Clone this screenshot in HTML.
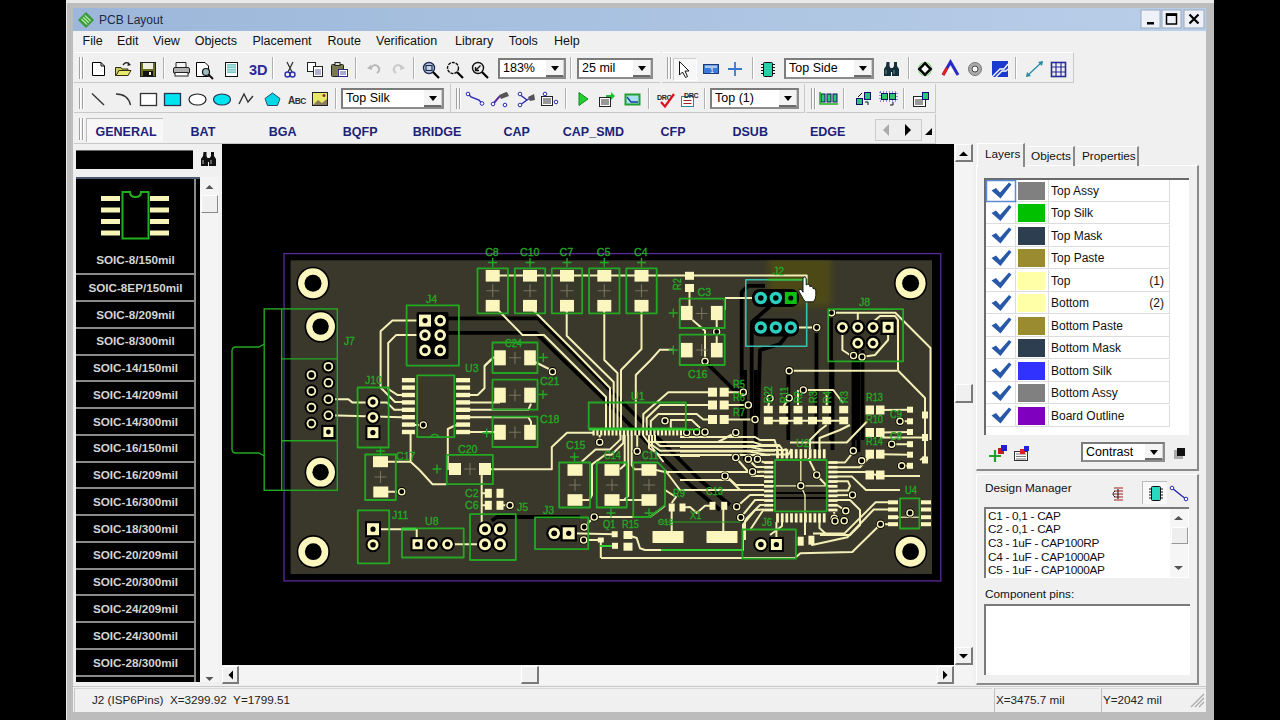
<!DOCTYPE html>
<html><head><meta charset="utf-8">
<style>
*{margin:0;padding:0;box-sizing:border-box}
html,body{width:1280px;height:720px;overflow:hidden;background:#000;font-family:"Liberation Sans",sans-serif}
.a{position:absolute}
#win{position:absolute;left:66px;top:0;width:1148px;height:720px;background:#bcbcbc;border-left:1px solid #e8e8e8}
#topw{position:absolute;left:66px;top:0;width:1148px;height:3px;background:#e9e9e9}
#title{position:absolute;left:73px;top:8px;width:1133px;height:23px;background:linear-gradient(to right,#9cb7da,#b9cee8)}
#title .t{position:absolute;left:26px;top:5px;font-size:12px;color:#1a2a44}
#client{position:absolute;left:73px;top:31px;width:1133px;height:681px;background:#f0f0f0}
.menu{position:absolute;top:34px;font-size:12.5px;color:#111}
.tb{position:absolute;border-top:1px solid #fdfdfd;border-bottom:1px solid #c8c8c8}
.grip{position:absolute;width:2px;border-left:1px solid #a0a0a0;border-right:1px solid #fff}
.sep{position:absolute;width:2px;border-left:1px solid #b0b0b0;border-right:1px solid #fff}
.combo{position:absolute;background:#fff;border:2px solid #7c7c7c;border-bottom-color:#8c8c8c;border-right-color:#8c8c8c;font-size:12.5px;color:#000;padding-left:3px;line-height:17px}
.combo .btn{position:absolute;right:0;top:0;bottom:0;width:18px;background:#f4f4f4;border-right:1px solid #cfcfcf;border-bottom:2px solid #6a6a6a}
.combo .btn:after{content:"";position:absolute;left:5px;top:6px;border-left:4.5px solid transparent;border-right:4.5px solid transparent;border-top:5px solid #000}
.tab{position:absolute;top:124.5px;font-size:12.5px;font-weight:bold;color:#1c2278}
.lib{position:absolute;left:76px;width:119px;height:27px;border-bottom:2px solid #8a8a8a;color:#d8d8d8;font-size:12px;font-weight:bold;text-align:center;line-height:26px}
.lay{position:absolute;left:986px;width:184px;height:22px;border-bottom:1px solid #dcdcdc;border-right:1px solid #dcdcdc}
.lay .ck{position:absolute;left:0;top:0;width:30px;height:22px;border-right:1px solid #dcdcdc}
.lay .sw{position:absolute;left:32px;top:2px;width:27px;height:18px}
.lay .nm{position:absolute;left:65px;top:4px;font-size:12px;color:#111}
.lay .nr{position:absolute;right:5px;top:4px;font-size:12px;color:#111}
.lay .cl{position:absolute;left:62px;top:0;width:1px;height:22px;background:#dcdcdc}
svg{position:absolute;overflow:visible}
.rt{position:absolute;font-size:11.8px;color:#111;line-height:14px;white-space:nowrap}
.st{position:absolute;top:692px;font-size:11.7px;color:#222;white-space:nowrap;line-height:15px}
.libt{position:absolute;left:76px;width:119px;text-align:center;color:#d4d4d4;font-size:11.7px;font-weight:bold;line-height:16px}
</style></head><body>
<div id="win"></div>
<div id="topw"></div>
<div id="title"><div class="t">PCB Layout</div></div>
<div id="client"></div>
<div class="menu" style="left:82.5px">File</div><div class="menu" style="left:117px">Edit</div><div class="menu" style="left:153px">View</div><div class="menu" style="left:194.7px">Objects</div><div class="menu" style="left:252.5px">Placement</div><div class="menu" style="left:327.5px">Route</div><div class="menu" style="left:376px">Verification</div><div class="menu" style="left:455px">Library</div><div class="menu" style="left:508.7px">Tools</div><div class="menu" style="left:554px">Help</div>
<!-- toolbar bands -->
<div class="a" style="left:74px;top:52px;width:586px;height:31px;border-top:1px solid #fff;border-bottom:1px solid #c9c9c9"></div>
<div class="a" style="left:662px;top:52px;width:412px;height:31px;border-top:1px solid #fff;border-bottom:1px solid #c9c9c9;border-right:1px solid #c9c9c9"></div>
<div class="a" style="left:74px;top:84px;width:731px;height:29px;border-bottom:1px solid #c9c9c9;border-right:1px solid #c9c9c9"></div>
<div class="a" style="left:806px;top:84px;width:130px;height:29px;border-bottom:1px solid #c9c9c9;border-right:1px solid #c9c9c9"></div>
<div class="a" style="left:74px;top:114px;width:862px;height:30px;border-bottom:1px solid #c9c9c9;border-right:1px solid #c9c9c9"></div>
<!-- grippers -->
<div class="grip" style="left:79px;top:57px;height:22px"></div><div class="grip" style="left:82px;top:57px;height:22px"></div>
<div class="grip" style="left:79px;top:88px;height:21px"></div><div class="grip" style="left:82px;top:88px;height:21px"></div>
<div class="grip" style="left:79px;top:118px;height:22px"></div><div class="grip" style="left:82px;top:118px;height:22px"></div>
<div class="grip" style="left:667px;top:57px;height:22px"></div><div class="grip" style="left:670px;top:57px;height:22px"></div>
<div class="grip" style="left:810.5px;top:88px;height:21px"></div><div class="grip" style="left:813.5px;top:88px;height:21px"></div>
<!-- separators row1 -->
<div class="sep" style="left:163px;top:57px;height:22px"></div>
<div class="sep" style="left:272px;top:57px;height:22px"></div>
<div class="sep" style="left:355px;top:57px;height:22px"></div>
<div class="sep" style="left:413px;top:57px;height:22px"></div>
<div class="sep" style="left:570px;top:57px;height:22px"></div>
<div class="sep" style="left:752px;top:57px;height:22px"></div>
<div class="sep" style="left:908px;top:57px;height:22px"></div>
<div class="sep" style="left:1015px;top:57px;height:22px"></div>
<!-- separators row2 -->
<div class="sep" style="left:335px;top:88px;height:21px"></div>
<div class="a" style="left:450px;top:84px;width:1px;height:29px;background:#c9c9c9"></div><div class="grip" style="left:456px;top:88px;height:21px"></div><div class="grip" style="left:459px;top:88px;height:21px"></div>
<div class="sep" style="left:565px;top:88px;height:21px"></div>
<div class="sep" style="left:648px;top:88px;height:21px"></div>
<div class="sep" style="left:704px;top:88px;height:21px"></div>
<div class="sep" style="left:843px;top:88px;height:21px"></div>
<div class="sep" style="left:903px;top:88px;height:21px"></div>
<!-- pressed pointer button -->
<div class="a" style="left:673px;top:58px;width:24px;height:23px;background:#f7f7f7;border:1px solid #cfcfcf;border-right-color:#fff;border-bottom-color:#fff"></div>
<!-- combos -->
<div class="combo" style="left:498px;top:58px;width:68px;height:21px">183%<div class="btn"></div></div>
<div class="combo" style="left:577px;top:58px;width:76px;height:21px">25 mil<div class="btn"></div></div>
<div class="combo" style="left:784px;top:58px;width:90px;height:21px">Top Side<div class="btn"></div></div>
<div class="combo" style="left:341px;top:88px;width:103px;height:21px">Top Silk<div class="btn"></div></div>
<div class="combo" style="left:710px;top:88px;width:89px;height:21px">Top (1)<div class="btn"></div></div>

<svg class="a" style="left:0;top:0" width="1280" height="150" viewBox="0 0 1280 150">
<!-- title app icon -->
<g transform="translate(86,20) rotate(45)"><rect x="-5.7" y="-5.7" width="11.4" height="11.4" fill="#3a9a3a"/><path d="M-4,-2.5H4M-4,0H4M-4,2.5H4" stroke="#b8f0a8" stroke-width="1.3"/></g>
<!-- window buttons -->
<g>
<rect x="1141" y="10" width="19" height="18" fill="#eef2f8" stroke="#9aa8b8"/>
<rect x="1147" y="22" width="7" height="2.5" fill="#000"/>
<rect x="1162" y="10" width="19" height="18" fill="#eef2f8" stroke="#9aa8b8"/>
<rect x="1166.5" y="14" width="10" height="10" fill="none" stroke="#000" stroke-width="1.5"/><rect x="1166" y="13.5" width="11" height="2.5" fill="#000"/>
<rect x="1184" y="10" width="20" height="18" fill="#eef2f8" stroke="#9aa8b8"/>
<path d="M1189.5,14.5L1198.5,23.5M1198.5,14.5L1189.5,23.5" stroke="#000" stroke-width="2.2"/>
</g>
<!-- row1 -->
<path d="M92.5,62.5H101L104.5,66V75.5H92.5Z" fill="#fff" stroke="#000"/><path d="M101,62.5V66H104.5" fill="none" stroke="#000"/>
<path d="M115.5,67.5H121L122,69H128V75.5H115.5Z" fill="#c8c860" stroke="#303010"/><path d="M116,75.5L119,70.5H131L128,75.5Z" fill="#e8e870" stroke="#303010"/><path d="M123,65Q126,61 129,64" fill="none" stroke="#222" stroke-width="1.3"/><path d="M128,62L131,65L127.5,66Z" fill="#222"/>
<rect x="140.5" y="62.5" width="15" height="14" fill="#6e6e20" stroke="#222"/><rect x="143" y="63" width="10" height="6" fill="#f0f0e0"/><rect x="143" y="71" width="10" height="5.5" fill="#111"/><rect x="149" y="72" width="2" height="3" fill="#f0f0e0"/>
<path d="M176,67V62.5H186V67" fill="#f4f4f4" stroke="#222"/><rect x="173.5" y="67.5" width="16" height="6" rx="1.5" fill="#b0b0b0" stroke="#222"/><rect x="175" y="72.5" width="13" height="3.5" fill="#fff" stroke="#222"/>
<path d="M196.5,62.5H205L208.5,66V76.5H196.5Z" fill="#fff" stroke="#000"/><circle cx="206" cy="72" r="3.5" fill="#9bbcc0" stroke="#111" stroke-width="1.2"/><path d="M208.5,74.5L213,79" stroke="#111" stroke-width="2"/>
<rect x="225.5" y="62.5" width="12" height="14" fill="#fff" stroke="#111"/><rect x="227" y="64" width="9" height="9" fill="#7ac8c8"/><path d="M227,66H236M227,68.5H236M227,71H236" stroke="#e0f4f4" stroke-width="0.8"/>
<text x="249" y="75" font-family="Liberation Sans" font-weight="bold" font-size="14.5" fill="#2a2a9c">3D</text>
<path d="M287,62L292,72M293,62L288,72" stroke="#333" stroke-width="1.3"/><circle cx="287.5" cy="74.5" r="2.5" fill="none" stroke="#3030b0" stroke-width="1.4"/><circle cx="292.5" cy="74.5" r="2.5" fill="none" stroke="#3030b0" stroke-width="1.4"/>
<rect x="307.5" y="62.5" width="8" height="9" fill="#fff" stroke="#222"/><rect x="313.5" y="66.5" width="9" height="10" fill="#fff" stroke="#222"/><path d="M315,70H321M315,72H321M315,74H321" stroke="#3a3a8a" stroke-width="0.8"/>
<rect x="331.5" y="64.5" width="12" height="12" rx="1" fill="#7a7a50" stroke="#222"/><rect x="335" y="62.5" width="5" height="3" fill="#ddd" stroke="#222"/><rect x="338.5" y="69.5" width="9" height="7" fill="#fff" stroke="#2a2a8a"/><path d="M340,72H346M340,74H346" stroke="#2a2a8a" stroke-width="0.8"/>
<path d="M371,68Q374,63 378,66.5Q381,70 377,73" fill="none" stroke="#b8b8b8" stroke-width="2"/><path d="M367,68.5L371,64.5L372,70Z" fill="#b8b8b8"/>
<path d="M402,68Q399,63 395,66.5Q392,70 396,73" fill="none" stroke="#c8c8c8" stroke-width="2"/><path d="M405,68.5L401,64.5L400,70Z" fill="#c8c8c8"/>
<circle cx="429" cy="68" r="5.5" fill="#c9d6e8" stroke="#1e2c50" stroke-width="1.4"/><rect x="426" y="65.5" width="6" height="5" fill="none" stroke="#1e2c50" stroke-width="1.2"/><path d="M433,72L439,78" stroke="#000" stroke-width="2.2"/>
<circle cx="453" cy="68" r="5.5" fill="#eee" stroke="#111" stroke-width="1.4" stroke-dasharray="3 1"/><path d="M457,72L463,78" stroke="#000" stroke-width="2.2"/>
<circle cx="478" cy="68" r="5.5" fill="#eee" stroke="#111" stroke-width="1.4"/><path d="M480.5,65.5L475.5,70.5M475.5,67V70.5H479" fill="none" stroke="#111" stroke-width="1.4"/><path d="M482,72L488,78" stroke="#000" stroke-width="2.2"/>
<path d="M679.5,61.5V75L682.5,72L685.5,77.5L687.5,76.5L685,71H689Z" fill="#fff" stroke="#111"/>
<rect x="703.5" y="64.5" width="15" height="9" fill="#3a7ad8" stroke="#1a3a80"/><rect x="705" y="65.5" width="12" height="2.5" fill="#aac8f0"/><text x="710" y="73" font-size="7" font-family="Liberation Sans" fill="#fff">1</text>
<path d="M728,69H742M735,62V76" stroke="#3a78c8" stroke-width="1.8"/>
<rect x="763.5" y="62.5" width="9" height="14" rx="1" fill="#28d0a8" stroke="#111"/><path d="M761,64.5H763M761,67.5H763M761,70.5H763M761,73.5H763M773,64.5H775M773,67.5H775M773,70.5H775M773,73.5H775" stroke="#111" stroke-width="1.2"/>
<path d="M886.5,62H889.5V66L891,69V76H884V69L886,66Z M894,62H897V66L899,69V76H892V69L894,66Z" fill="#14303a"/><rect x="889" y="68" width="5" height="4" fill="#14303a"/><path d="M886,70V74M894,70V74" stroke="#6a8a90" stroke-width="1"/>
<circle cx="925" cy="69" r="6.5" fill="none" stroke="#60d060" stroke-width="1"/><rect x="921" y="65" width="8" height="8" transform="rotate(45 925 69)" fill="#fff" stroke="#000" stroke-width="2.5"/>
<path d="M943,75L950.5,62L958,75" fill="none" stroke="#2828c8" stroke-width="3"/><path d="M943,75L947,68" stroke="#e02020" stroke-width="3"/><circle cx="950.5" cy="71" r="2.5" fill="#fff"/>
<circle cx="975" cy="69" r="6.5" fill="#aaa" stroke="#777"/><circle cx="975" cy="69" r="3" fill="#fff" stroke="#444"/>
<rect x="992" y="61" width="16" height="16" fill="#1a3ad0"/><path d="M992,77L1000,69H1004L1008,64M996,77L1002,71H1006L1008,69" stroke="#fff" stroke-width="1.3" fill="none"/>
<path d="M1027,76L1042,62" stroke="#2a8aa0" stroke-width="1.3"/><path d="M1026,77L1027,72L1031,76Z M1043,61L1042,66L1038,62Z" fill="#2a8aa0"/>
<rect x="1051.5" y="62.5" width="14" height="14" fill="none" stroke="#2a2a9a" stroke-width="1.6"/><path d="M1056,62.5V76.5M1061,62.5V76.5M1051.5,67H1065.5M1051.5,72H1065.5" stroke="#2a2a9a" stroke-width="1.2"/>
<!-- row2 -->
<path d="M92,93.5L104,105" stroke="#333" stroke-width="1.4"/>
<path d="M116,94Q128,94 130.5,105" fill="none" stroke="#333" stroke-width="1.4"/>
<rect x="140.5" y="93.5" width="16" height="12" fill="#fff" stroke="#333" stroke-width="1.3"/>
<rect x="164.5" y="93.5" width="16" height="12" fill="#00e4f0" stroke="#235" stroke-width="1.3"/>
<ellipse cx="197.5" cy="99.5" rx="8.5" ry="5.5" fill="#fff" stroke="#222" stroke-width="1.2"/>
<ellipse cx="222" cy="99.5" rx="8.5" ry="5.5" fill="#00e4f0" stroke="#235" stroke-width="1.2"/>
<path d="M239,104L244,94L248,102L253,96" fill="none" stroke="#333" stroke-width="1.4"/>
<path d="M272.5,93L280,98.5L277.5,105.5H267.5L265,98.5Z" fill="#00d8e8" stroke="#2a4a6a"/>
<text x="288" y="104" font-family="Liberation Sans" font-weight="bold" font-size="10" fill="#333" letter-spacing="-0.5">A<tspan font-size="8.5">BC</tspan></text>
<rect x="312.5" y="92.5" width="15" height="13" fill="#e8e868" stroke="#222"/><path d="M313,105L318,100L322,103L327,99V105Z" fill="#8a7a60"/><circle cx="324" cy="95.5" r="1.5" fill="#8a2a2a"/>
<path d="M468,93.5L471,97L479,100L482,103.5" fill="none" stroke="#2a2ab0" stroke-width="1.4"/><circle cx="468" cy="94" r="1.8" fill="#fff" stroke="#2a2ab0"/><circle cx="482" cy="103.5" r="1.8" fill="#fff" stroke="#2a2ab0"/>
<path d="M493,104L499,97L506,93" fill="none" stroke="#5a2aa0" stroke-width="2"/><path d="M499,95L507,92L509,96L501,99Z" fill="#555"/><circle cx="493" cy="104" r="1.8" fill="#fff" stroke="#2a2ab0"/><circle cx="505" cy="105" r="1.8" fill="#fff" stroke="#2a2ab0"/>
<path d="M519,94L527,100L520,105M527,100L534,96" fill="none" stroke="#2a2ab0" stroke-width="1.4"/><path d="M528,97L534,94L535,100L530,101Z" fill="#555"/><circle cx="520" cy="94" r="1.8" fill="#fff" stroke="#2a2ab0"/><circle cx="520" cy="105" r="1.8" fill="#fff" stroke="#2a2ab0"/>
<rect x="541.5" y="96.5" width="11" height="9" fill="#fff" stroke="#222"/><path d="M543,99H551M543,101H551M543,103H551" stroke="#333"/><circle cx="545" cy="94" r="1.8" fill="#fff" stroke="#2a2ab0"/><circle cx="556" cy="102" r="1.8" fill="#fff" stroke="#2a2ab0"/>
<path d="M579,92.5L588,99L579,105.5Z" fill="#20d030" stroke="#108a20"/>
<rect x="599.5" y="97.5" width="11" height="9" fill="#fff" stroke="#222"/><path d="M601,100H609M601,102H609M601,104H609" stroke="#333"/><path d="M606,95H611V92L615,96L611,100V97H606Z" fill="#20c030"/>
<rect x="625.5" y="94.5" width="14" height="10" fill="#a8e0f0" stroke="#20a030" stroke-width="2"/><path d="M627,97L631,102H638" fill="none" stroke="#1a3aa0" stroke-width="1.3"/>
<text x="657" y="100" font-family="Liberation Sans" font-weight="bold" font-size="7" fill="#222" letter-spacing="-0.3">DRC</text><path d="M661,102L665,106.5L674,94" fill="none" stroke="#e01020" stroke-width="2.2"/>
<rect x="681.5" y="96.5" width="12" height="10" fill="#fff" stroke="#2a8aa0"/><path d="M683.5,100.5H691.5M683.5,103.5H691.5" stroke="#a02020" stroke-width="1"/><text x="684" y="98" font-family="Liberation Sans" font-weight="bold" font-size="7" fill="#222" letter-spacing="-0.3">DRC</text>
<rect x="821" y="94" width="4" height="8" fill="#28c870" stroke="#116"/><rect x="827" y="94" width="4" height="8" fill="#28c870" stroke="#116"/><rect x="833" y="94" width="4" height="8" fill="#28c870" stroke="#116"/><path d="M820,92V104H838" fill="none" stroke="#20b020" stroke-width="1.6"/>
<rect x="856.5" y="98.5" width="6" height="6" fill="#28c870" stroke="#116"/><rect x="864.5" y="92.5" width="6" height="7" fill="#28c870" stroke="#116"/><path d="M858,97L862,93M865,102H868V105" stroke="#111" fill="none"/>
<rect x="881.5" y="93.5" width="6" height="6" fill="#28c870" stroke="#116"/><rect x="889.5" y="93.5" width="6" height="6" fill="#28c870" stroke="#116"/><path d="M893,102V105H890" stroke="#111" fill="none"/><rect x="880" y="92" width="17" height="9" fill="none" stroke="#2a2ad0" stroke-dasharray="1 2"/>
<rect x="913.5" y="96.5" width="12" height="10" fill="#fff" stroke="#222"/><path d="M915,100H923M915,102H923M915,104H923" stroke="#333"/><rect x="922.5" y="92.5" width="6" height="7" fill="#28c870" stroke="#116"/>
<!-- tabs bar nav -->
<rect x="875.5" y="119.5" width="46" height="21" fill="#eee" stroke="#ccc"/>
<path d="M889,124V136L883,130Z" fill="#aaa"/><path d="M905,124V136L911,130Z" fill="#000"/>
<path d="M925,135H932V128Z" fill="#000"/>
<!-- binoculars left panel -->
<path d="M203.5,152H206.5V156L208,159V166H201V159L203,156Z M211,152H214V156L216,159V166H209V159L211,156Z" fill="#111"/><rect x="206" y="158" width="5" height="4" fill="#111"/><path d="M203,160V164M211,160V164" stroke="#bbb" stroke-width="1"/>
</svg>

<div class="a" style="left:86px;top:118px;width:77px;height:24px;background:#f7f7f7;border-top:1px solid #bdbdbd;border-left:1px solid #bdbdbd"></div>
<div class="tab" style="left:95.5px">GENERAL</div><div class="tab" style="left:190.5px">BAT</div><div class="tab" style="left:268.7px">BGA</div><div class="tab" style="left:342.8px">BQFP</div><div class="tab" style="left:412.8px">BRIDGE</div><div class="tab" style="left:503.4px">CAP</div><div class="tab" style="left:562.8px">CAP_SMD</div><div class="tab" style="left:660.6px">CFP</div><div class="tab" style="left:732.5px">DSUB</div><div class="tab" style="left:810px">EDGE</div>
<div class="a" style="left:76px;top:150px;width:117px;height:19px;background:#000;border-top:1px solid #666"></div>
<div class="a" style="left:76px;top:177px;width:124px;height:505px;background:#000;border-top:2px solid #4a5a70"></div>
<div class="a" style="left:194px;top:179px;width:2px;height:503px;background:#8a8a8a"></div>
<svg class="a" style="left:0;top:0" width="240" height="280" viewBox="0 0 240 280">
<g fill="#f8f4b8"><rect x="101" y="196" width="19" height="5"/><rect x="101" y="207.5" width="19" height="5"/><rect x="101" y="219" width="19" height="5"/><rect x="101" y="230.5" width="19" height="5"/>
<rect x="150" y="196" width="19" height="5"/><rect x="150" y="207.5" width="19" height="5"/><rect x="150" y="219" width="19" height="5"/><rect x="150" y="230.5" width="19" height="5"/></g>
<path d="M122.5,192H130Q130,197 135.5,197Q141,197 141,192H148.5V238.5H122.5Z" fill="none" stroke="#20b020" stroke-width="2"/>
</svg>
<div class="libt" style="top:252px">SOIC-8/150mil</div>
<div class="a" style="left:76px;top:273.2px;width:118px;height:2px;background:#8a8a8a"></div>
<div class="a" style="left:76px;top:300.0px;width:118px;height:2px;background:#8a8a8a"></div>
<div class="a" style="left:76px;top:326.7px;width:118px;height:2px;background:#8a8a8a"></div>
<div class="a" style="left:76px;top:353.5px;width:118px;height:2px;background:#8a8a8a"></div>
<div class="a" style="left:76px;top:380.3px;width:118px;height:2px;background:#8a8a8a"></div>
<div class="a" style="left:76px;top:407.0px;width:118px;height:2px;background:#8a8a8a"></div>
<div class="a" style="left:76px;top:433.8px;width:118px;height:2px;background:#8a8a8a"></div>
<div class="a" style="left:76px;top:460.6px;width:118px;height:2px;background:#8a8a8a"></div>
<div class="a" style="left:76px;top:487.4px;width:118px;height:2px;background:#8a8a8a"></div>
<div class="a" style="left:76px;top:514.1px;width:118px;height:2px;background:#8a8a8a"></div>
<div class="a" style="left:76px;top:540.9px;width:118px;height:2px;background:#8a8a8a"></div>
<div class="a" style="left:76px;top:567.7px;width:118px;height:2px;background:#8a8a8a"></div>
<div class="a" style="left:76px;top:594.4px;width:118px;height:2px;background:#8a8a8a"></div>
<div class="a" style="left:76px;top:621.2px;width:118px;height:2px;background:#8a8a8a"></div>
<div class="a" style="left:76px;top:648.0px;width:118px;height:2px;background:#8a8a8a"></div>
<div class="a" style="left:76px;top:674.8px;width:118px;height:2px;background:#8a8a8a"></div>
<div class="libt" style="top:279.7px">SOIC-8EP/150mil</div>
<div class="libt" style="top:306.5px">SOIC-8/209mil</div>
<div class="libt" style="top:333.2px">SOIC-8/300mil</div>
<div class="libt" style="top:360.0px">SOIC-14/150mil</div>
<div class="libt" style="top:386.8px">SOIC-14/209mil</div>
<div class="libt" style="top:413.5px">SOIC-14/300mil</div>
<div class="libt" style="top:440.3px">SOIC-16/150mil</div>
<div class="libt" style="top:467.1px">SOIC-16/209mil</div>
<div class="libt" style="top:493.9px">SOIC-16/300mil</div>
<div class="libt" style="top:520.6px">SOIC-18/300mil</div>
<div class="libt" style="top:547.4px">SOIC-20/209mil</div>
<div class="libt" style="top:574.2px">SOIC-20/300mil</div>
<div class="libt" style="top:600.9px">SOIC-24/209mil</div>
<div class="libt" style="top:627.7px">SOIC-24/300mil</div>
<div class="libt" style="top:654.5px">SOIC-28/300mil</div>
<div class="a" style="left:200px;top:177px;width:19px;height:505px;background:#f4f4f4"></div>
<div class="a" style="left:201px;top:195px;width:17px;height:18px;background:#f0f0f0;border:1px solid #fff;border-right-color:#8a8a8a;border-bottom-color:#8a8a8a"></div>
<svg class="a" style="left:0;top:0" width="240" height="700"><path d="M205.5,189H213.5L209.5,185Z" fill="#555"/><path d="M205.5,677H213.5L209.5,681Z" fill="#555"/></svg>
<div class="a" style="left:222px;top:144px;width:732px;height:521px;background:#000"></div>
<!--PCB--><svg class="a" style="left:0;top:0" width="1280" height="720" viewBox="0 0 1280 720">
<rect x="284" y="253.6" width="656.8" height="327.3" fill="none" stroke="#5a2a9a" stroke-width="1.3"/>
<rect x="290.6" y="260.3" width="641.4" height="313.7" fill="#3a382b"/>
<clipPath id="bc"><rect x="290.6" y="260.3" width="641.4" height="313.7"/></clipPath>
<g clip-path="url(#bc)"><defs><filter id="gb" x="-20%" y="-20%" width="140%" height="140%"><feGaussianBlur stdDeviation="3"/></filter></defs><rect x="769" y="256" width="62" height="50" fill="#4e4818" filter="url(#gb)"/>
<g fill="none" stroke="#000" stroke-linejoin="round"><polyline points="446.0,318.3 538.0,318.3 560.0,340.0 618.0,398.0 660.0,440.0 700.0,480.0 730.0,505.0" stroke-width="3.8"/><polyline points="446.0,332.8 536.0,332.8 552.0,349.0 610.0,405.0 650.0,445.0 690.0,485.0 720.0,510.0" stroke-width="3.8"/><polyline points="491.7,520.8 497.0,517.0 540.0,517.0 580.0,517.0" stroke-width="3.8"/><polyline points="705.0,361.3 733.0,389.0 743.0,392.0" stroke-width="3.8"/><polyline points="765.0,285.8 748.0,285.8 741.7,292.0 741.7,370.0 741.7,420.0" stroke-width="3.8"/><polyline points="775.0,300.0 768.0,308.0 752.0,322.0 751.7,340.0 751.7,420.0" stroke-width="3.8"/><polyline points="790.8,330.0 780.0,344.0 760.0,350.0 758.0,420.0" stroke-width="3.8"/><polyline points="816.5,333.0 816.5,450.0" stroke-width="3.8"/><polyline points="831.0,318.0 831.0,440.0" stroke-width="3.8"/><polyline points="853.5,360.0 853.5,452.0" stroke-width="3.8"/><polyline points="858.4,360.0 858.4,452.0" stroke-width="3.8"/><polyline points="745.0,370.0 745.0,460.0" stroke-width="3.8"/><polyline points="755.8,370.0 755.8,455.0" stroke-width="3.8"/><polyline points="788.3,375.0 788.3,440.0" stroke-width="3.8"/><polyline points="832.5,360.0 832.5,450.0" stroke-width="3.8"/><polyline points="856.7,350.0 856.7,440.0" stroke-width="3.8"/><polyline points="862.5,350.0 862.5,440.0" stroke-width="3.8"/><polyline points="775.0,493.0 826.7,493.0" stroke-width="2.2"/><polyline points="775.0,498.0 826.7,498.0" stroke-width="2.2"/></g>
<g fill="none" stroke="#f3efb6" stroke-linejoin="round"><polyline points="328.4,399.2 348.4,399.2 352.6,402.6 372.9,402.6 387.0,402.6 394.3,409.7 402.0,409.7" stroke-width="2.0"/><polyline points="328.4,415.3 402.0,417.3" stroke-width="2.0"/><polyline points="425.0,320.6 392.4,320.6 380.6,331.3 380.6,387.5 395.0,402.0 402.0,402.0" stroke-width="2.0"/><polyline points="425.0,335.1 396.0,335.1 388.2,343.0 388.2,389.0 397.3,394.9 402.0,394.9" stroke-width="2.0"/><polyline points="414.0,425.0 420.0,425.0" stroke-width="2.0"/><polyline points="410.6,432.0 410.6,461.7 419.5,470.0 432.5,484.2 446.7,484.2" stroke-width="2.0"/><polyline points="410.6,461.7 387.4,461.7" stroke-width="2.0"/><polyline points="470.0,395.0 477.6,395.0 484.5,388.3 484.5,366.0 490.6,360.0 494.2,357.0" stroke-width="2.0"/><polyline points="470.0,402.4 500.0,402.4" stroke-width="2.0"/><polyline points="470.0,409.8 528.3,409.8 531.0,403.6" stroke-width="2.0"/><polyline points="470.0,417.2 528.3,417.2 531.0,421.7 531.0,426.0" stroke-width="2.0"/><polyline points="470.0,432.0 500.0,432.0" stroke-width="2.0"/><polyline points="456.0,425.0 447.8,429.0 447.8,470.0" stroke-width="2.0"/><polyline points="388.0,491.7 398.0,491.7" stroke-width="2.0"/><polyline points="373.0,529.2 416.7,529.2 416.7,540.0" stroke-width="2.0"/><polyline points="447.5,544.2 485.0,544.2" stroke-width="2.0"/><polyline points="481.7,470.0 481.7,525.0" stroke-width="2.0"/><polyline points="500.0,505.3 506.0,505.3" stroke-width="2.0"/><polyline points="481.7,493.3 488.0,493.3" stroke-width="2.0"/><polyline points="481.7,505.3 488.0,505.3" stroke-width="2.0"/><polyline points="492.7,275.6 800.0,275.6" stroke-width="2.0"/><polyline points="499.0,311.0 522.5,335.0 544.0,335.0 606.0,397.0 606.0,430.0" stroke-width="2.0"/><polyline points="534.0,311.0 573.0,350.0 610.0,388.0 610.0,430.0" stroke-width="2.0"/><polyline points="566.7,311.0 566.7,335.8 613.7,382.0 613.7,430.0" stroke-width="2.0"/><polyline points="604.3,311.0 604.3,360.0 617.5,373.0 617.5,430.0" stroke-width="2.0"/><polyline points="641.5,311.0 641.5,349.0 621.0,370.0 621.0,430.0" stroke-width="2.0"/><polyline points="535.0,362.0 549.0,369.0" stroke-width="2.0"/><polyline points="484.5,366.0 494.0,357.0" stroke-width="2.0"/><polyline points="635.8,430.0 635.8,375.0 650.8,360.0 660.0,349.7 673.0,349.7" stroke-width="2.0"/><polyline points="599.7,435.0 599.7,442.2" stroke-width="2.0"/><polyline points="724.0,392.2 743.0,392.2" stroke-width="2.0"/><polyline points="724.0,405.0 748.0,405.0" stroke-width="2.0"/><polyline points="724.0,419.5 755.0,419.5" stroke-width="2.0"/><polyline points="712.0,392.2 668.3,392.2 643.3,414.0 643.3,430.0" stroke-width="2.0"/><polyline points="712.0,405.0 660.0,405.0 646.7,418.0 646.7,430.0" stroke-width="2.0"/><polyline points="712.0,419.5 703.3,419.5 696.7,414.0 658.3,414.0 650.8,421.0 650.8,430.0" stroke-width="2.0"/><polyline points="670.8,430.0 670.8,420.0 691.7,420.0 700.0,428.0" stroke-width="2.0"/><polyline points="655.0,435.0 655.0,441.7 660.0,446.0 780.0,446.0" stroke-width="2.0"/><polyline points="652.0,435.0 652.0,445.0 660.0,450.8 775.0,450.8" stroke-width="2.0"/><polyline points="649.0,435.0 649.0,448.0 660.0,455.0 770.0,455.0" stroke-width="2.0"/><polyline points="735.8,432.5 718.0,442.0 650.0,442.0" stroke-width="2.0"/><polyline points="689.5,288.0 689.5,306.0" stroke-width="2.0"/><polyline points="692.5,320.0 705.0,330.8 705.0,361.3" stroke-width="2.0"/><polyline points="716.7,320.0 716.7,343.0" stroke-width="2.0"/><polyline points="760.8,298.0 725.0,298.0" stroke-width="2.0"/><polyline points="790.8,327.5 816.7,327.5" stroke-width="2.0"/><polyline points="800.0,275.6 806.7,275.6 806.7,300.0" stroke-width="2.0"/><polyline points="831.5,312.7 895.3,312.7 930.5,348.0 930.5,440.0" stroke-width="2.0"/><polyline points="857.8,312.7 857.8,322.0" stroke-width="2.0"/><polyline points="873.0,322.0 880.0,316.0 895.0,316.0 898.0,320.0 898.0,370.5" stroke-width="2.0"/><polyline points="898.0,370.5 925.0,398.0 925.0,456.7 920.0,460.0" stroke-width="2.0"/><polyline points="842.4,332.0 842.4,350.0 853.0,357.0" stroke-width="2.0"/><polyline points="888.1,332.0 888.1,340.0 875.0,355.0 862.0,357.0" stroke-width="2.0"/><polyline points="789.2,370.8 897.5,370.8" stroke-width="2.0"/><polyline points="768.3,420.8 843.7,420.8" stroke-width="2.0"/><polyline points="770.0,398.3 768.3,406.0" stroke-width="2.0"/><polyline points="789.2,398.0 783.7,406.0" stroke-width="2.0"/><polyline points="803.3,390.0 833.3,390.0 843.0,403.0" stroke-width="2.0"/><polyline points="798.0,390.0 798.0,405.0" stroke-width="2.0"/><polyline points="826.7,395.0 826.7,405.0" stroke-width="2.0"/><polyline points="880.8,410.0 910.0,409.7" stroke-width="2.0"/><polyline points="880.8,432.5 910.0,432.0" stroke-width="2.0"/><polyline points="880.8,454.2 910.0,454.7" stroke-width="2.0"/><polyline points="900.0,421.3 910.0,421.3" stroke-width="2.0"/><polyline points="891.7,444.2 910.0,444.2" stroke-width="2.0"/><polyline points="901.7,465.8 910.0,465.8" stroke-width="2.0"/><polyline points="866.7,421.7 846.7,442.5 790.0,442.5" stroke-width="2.0"/><polyline points="880.0,437.5 925.0,437.5" stroke-width="2.0"/><polyline points="764.0,485.8 837.0,485.8" stroke-width="1.3"/><polyline points="800.8,449.0 800.8,485.8 805.0,495.0 805.0,522.0" stroke-width="1.3"/><polyline points="808.3,458.0 816.7,475.0 826.0,485.0" stroke-width="2.0"/><polyline points="680.0,437.0 755.0,437.0 760.0,440.0 774.5,440.0 777.5,449.0" stroke-width="2.0"/><polyline points="680.0,442.0 753.0,442.0 762.0,445.0 779.2,445.0 782.2,449.0" stroke-width="2.0"/><polyline points="680.0,447.0 751.0,447.0 764.0,450.0 783.8,450.0 786.8,449.0" stroke-width="2.0"/><polyline points="680.0,451.5 749.0,451.5 766.0,454.5 788.5,454.5 791.5,449.0" stroke-width="2.0"/><polyline points="680.0,456.0 700.0,456.0" stroke-width="2.0"/><polyline points="810.0,449.0 810.0,440.0 820.0,430.0 826.7,425.0" stroke-width="2.0"/><polyline points="819.5,449.0 819.5,438.0 840.0,430.0 850.0,425.0" stroke-width="2.0"/><polyline points="757.5,459.2 764.0,462.5" stroke-width="2.0"/><polyline points="748.3,459.2 756.0,467.0 764.0,467.0" stroke-width="2.0"/><polyline points="735.8,457.5 752.0,476.0 764.0,476.0" stroke-width="2.0"/><polyline points="752.5,471.7 764.0,471.7" stroke-width="2.0"/><polyline points="680.0,480.0 730.0,480.0 740.0,490.0 764.0,490.0" stroke-width="2.0"/><polyline points="680.0,472.0 722.0,472.0 736.0,485.0 764.0,485.0" stroke-width="2.0"/><polyline points="764.0,495.0 750.0,495.0 736.7,506.7" stroke-width="2.0"/><polyline points="764.0,500.0 755.0,500.0 740.8,517.5" stroke-width="2.0"/><polyline points="764.0,505.0 760.0,505.0 745.0,520.0 745.0,540.0" stroke-width="2.0"/><polyline points="764.0,509.5 762.0,512.0 750.0,530.0" stroke-width="2.0"/><polyline points="837.0,462.5 845.0,462.5 853.3,452.0" stroke-width="2.0"/><polyline points="837.0,467.2 860.0,467.2 872.0,454.2" stroke-width="2.0"/><polyline points="837.0,471.9 865.0,471.9 880.0,476.0 920.0,476.0" stroke-width="2.0"/><polyline points="837.0,476.6 852.0,476.6 866.0,490.0 900.0,490.0" stroke-width="2.0"/><polyline points="837.0,481.3 848.0,481.3 850.0,485.8 848.0,490.5 837.0,490.5" stroke-width="2.0"/><polyline points="837.0,495.2 852.5,495.0" stroke-width="2.0"/><polyline points="837.0,500.0 850.0,500.0 860.0,510.0 860.0,525.0 850.0,535.0 820.0,535.0" stroke-width="2.0"/><polyline points="837.0,505.0 845.8,510.8" stroke-width="2.0"/><polyline points="834.2,518.3 834.2,512.0" stroke-width="2.0"/><polyline points="805.0,522.0 805.0,535.0" stroke-width="2.0"/><polyline points="782.0,522.0 782.0,526.0 770.0,535.0" stroke-width="2.0"/><polyline points="819.5,522.0 819.5,528.0 826.0,534.0" stroke-width="2.0"/><polyline points="776.4,522.0 776.4,540.0" stroke-width="2.0"/><polyline points="888.0,502.3 875.6,502.3 844.5,533.4 813.0,533.4" stroke-width="2.0"/><polyline points="888.0,509.5 873.7,509.5 847.4,537.3 812.0,545.0 812.0,540.0" stroke-width="2.0"/><polyline points="888.0,524.2 880.5,524.2 852.3,552.0 800.4,553.3 795.0,558.0 601.0,558.0" stroke-width="2.0"/><polyline points="893.0,517.2 920.0,517.2" stroke-width="1.2"/><polyline points="490.0,469.3 551.8,469.3 551.8,447.0 567.0,432.8 593.5,432.8" stroke-width="2.0"/><polyline points="581.7,461.7 595.5,449.4 610.0,449.4 620.5,439.4 620.5,435.0" stroke-width="2.0"/><polyline points="582.0,500.0 589.3,500.0 592.0,495.0 592.0,464.4 605.3,454.7 611.5,454.7 623.3,443.0 623.3,435.0" stroke-width="2.0"/><polyline points="619.9,469.3 624.7,465.0 624.7,435.0" stroke-width="2.0"/><polyline points="628.2,435.0 628.2,496.0 624.0,500.0" stroke-width="2.0"/><polyline points="619.5,500.0 642.0,500.0" stroke-width="2.0"/><polyline points="642.0,469.3 634.4,469.3 631.7,465.0 631.7,435.0" stroke-width="2.0"/><polyline points="642.8,435.0 658.0,455.0 663.6,462.0" stroke-width="2.0"/><polyline points="637.2,451.3 637.2,435.0" stroke-width="2.0"/><polyline points="656.0,470.0 665.0,472.0 760.0,472.0" stroke-width="2.0"/><polyline points="665.0,470.0 680.0,490.0 750.0,490.0" stroke-width="2.0"/><polyline points="594.2,517.0 650.0,517.0 665.0,505.8" stroke-width="2.0"/><polyline points="584.2,527.0 594.0,517.0" stroke-width="2.0"/><polyline points="568.7,533.3 614.7,534.2" stroke-width="2.0"/><polyline points="583.7,540.0 600.8,540.0 600.8,558.0" stroke-width="2.0"/><polyline points="628.0,535.0 636.7,538.0 640.0,548.3 645.0,550.0 743.0,550.0 743.0,524.6 755.0,510.0 764.0,509.5" stroke-width="2.0"/><polyline points="682.5,507.5 690.0,507.0 696.7,513.0 705.0,505.8 712.5,505.8" stroke-width="2.0"/><polyline points="671.7,507.5 671.7,531.0" stroke-width="2.0"/><polyline points="723.3,505.8 723.3,531.0" stroke-width="2.0"/><polyline points="665.0,490.0 676.0,497.0 671.7,503.0" stroke-width="2.0"/><polyline points="725.0,298.0 725.0,310.0" stroke-width="2.0"/></g>
</g>
<circle cx="313" cy="283.3" r="16.6" fill="#000"/><circle cx="313" cy="283.3" r="15" fill="#fbf6bd"/><circle cx="313" cy="283.3" r="8.5" fill="#000"/>
<circle cx="910.6" cy="283.3" r="16.6" fill="#000"/><circle cx="910.6" cy="283.3" r="15" fill="#fbf6bd"/><circle cx="910.6" cy="283.3" r="8.5" fill="#000"/>
<circle cx="313.3" cy="551.7" r="16.6" fill="#000"/><circle cx="313.3" cy="551.7" r="15" fill="#fbf6bd"/><circle cx="313.3" cy="551.7" r="8.4" fill="#000"/>
<circle cx="910.6" cy="551.7" r="16.6" fill="#000"/><circle cx="910.6" cy="551.7" r="15" fill="#fbf6bd"/><circle cx="910.6" cy="551.7" r="8.4" fill="#000"/>
<circle cx="320.6" cy="326.6" r="16.0" fill="#000"/><circle cx="320.6" cy="326.6" r="14.4" fill="#fbf6bd"/><circle cx="320.6" cy="326.6" r="8.2" fill="#000"/>
<circle cx="320.6" cy="472.2" r="16.0" fill="#000"/><circle cx="320.6" cy="472.2" r="14.4" fill="#fbf6bd"/><circle cx="320.6" cy="472.2" r="8.2" fill="#000"/>
<circle cx="328.4" cy="366.7" r="6.8" fill="#000"/><circle cx="328.4" cy="366.7" r="4.8" fill="#fbf6bd"/><circle cx="328.4" cy="366.7" r="3.0" fill="#000"/><circle cx="328.4" cy="382.8" r="6.8" fill="#000"/><circle cx="328.4" cy="382.8" r="4.8" fill="#fbf6bd"/><circle cx="328.4" cy="382.8" r="3.0" fill="#000"/><circle cx="328.4" cy="399.2" r="6.8" fill="#000"/><circle cx="328.4" cy="399.2" r="4.8" fill="#fbf6bd"/><circle cx="328.4" cy="399.2" r="3.0" fill="#000"/><circle cx="328.4" cy="415.3" r="6.8" fill="#000"/><circle cx="328.4" cy="415.3" r="4.8" fill="#fbf6bd"/><circle cx="328.4" cy="415.3" r="3.0" fill="#000"/><rect x="321.2" y="424.8" width="14.4" height="14.4" fill="#000"/><rect x="323.4" y="427.0" width="10.0" height="10.0" fill="#fbf6bd"/><circle cx="328.4" cy="432.0" r="2.4" fill="#000"/><circle cx="311.4" cy="375.0" r="6.8" fill="#000"/><circle cx="311.4" cy="375.0" r="4.8" fill="#fbf6bd"/><circle cx="311.4" cy="375.0" r="3.0" fill="#000"/><circle cx="311.4" cy="391.1" r="6.8" fill="#000"/><circle cx="311.4" cy="391.1" r="4.8" fill="#fbf6bd"/><circle cx="311.4" cy="391.1" r="3.0" fill="#000"/><circle cx="311.4" cy="407.5" r="6.8" fill="#000"/><circle cx="311.4" cy="407.5" r="4.8" fill="#fbf6bd"/><circle cx="311.4" cy="407.5" r="3.0" fill="#000"/><circle cx="311.4" cy="423.6" r="6.8" fill="#000"/><circle cx="311.4" cy="423.6" r="4.8" fill="#fbf6bd"/><circle cx="311.4" cy="423.6" r="3.0" fill="#000"/><rect x="416.5" y="312" width="32" height="47" fill="#000" rx="2"/><rect x="417.5" y="313.1" width="15.0" height="15.0" fill="#000"/><rect x="419.0" y="314.6" width="12.0" height="12.0" fill="#fbf6bd"/><circle cx="425.0" cy="320.6" r="2.6" fill="#000"/><circle cx="440.2" cy="320.6" r="7.3" fill="#000"/><circle cx="440.2" cy="320.6" r="5.8" fill="#fbf6bd"/><circle cx="440.2" cy="320.6" r="2.9" fill="#000"/><circle cx="425.0" cy="335.1" r="7.3" fill="#000"/><circle cx="425.0" cy="335.1" r="5.8" fill="#fbf6bd"/><circle cx="425.0" cy="335.1" r="2.9" fill="#000"/><circle cx="440.2" cy="335.1" r="7.3" fill="#000"/><circle cx="440.2" cy="335.1" r="5.8" fill="#fbf6bd"/><circle cx="440.2" cy="335.1" r="2.9" fill="#000"/><circle cx="425.0" cy="350.4" r="7.3" fill="#000"/><circle cx="425.0" cy="350.4" r="5.8" fill="#fbf6bd"/><circle cx="425.0" cy="350.4" r="2.9" fill="#000"/><circle cx="440.2" cy="350.4" r="7.3" fill="#000"/><circle cx="440.2" cy="350.4" r="5.8" fill="#fbf6bd"/><circle cx="440.2" cy="350.4" r="2.9" fill="#000"/><circle cx="372.9" cy="402.0" r="7.4" fill="#000"/><circle cx="372.9" cy="402.0" r="5.4" fill="#fbf6bd"/><circle cx="372.9" cy="402.0" r="2.7" fill="#000"/><circle cx="372.9" cy="417.3" r="7.4" fill="#000"/><circle cx="372.9" cy="417.3" r="5.4" fill="#fbf6bd"/><circle cx="372.9" cy="417.3" r="2.7" fill="#000"/><rect x="365.4" y="425.1" width="15.0" height="15.0" fill="#000"/><rect x="367.4" y="427.1" width="11.0" height="11.0" fill="#fbf6bd"/><circle cx="372.9" cy="432.6" r="2.6" fill="#000"/><rect x="401.9" y="378.0" width="13.0" height="4.4" fill="#fbf6bd"/><rect x="456.1" y="378.0" width="14.0" height="4.4" fill="#fbf6bd"/><rect x="401.9" y="385.4" width="13.0" height="4.4" fill="#fbf6bd"/><rect x="456.1" y="385.4" width="14.0" height="4.4" fill="#fbf6bd"/><rect x="401.9" y="392.8" width="13.0" height="4.4" fill="#fbf6bd"/><rect x="456.1" y="392.8" width="14.0" height="4.4" fill="#fbf6bd"/><rect x="401.9" y="400.2" width="13.0" height="4.4" fill="#fbf6bd"/><rect x="456.1" y="400.2" width="14.0" height="4.4" fill="#fbf6bd"/><rect x="401.9" y="407.6" width="13.0" height="4.4" fill="#fbf6bd"/><rect x="456.1" y="407.6" width="14.0" height="4.4" fill="#fbf6bd"/><rect x="401.9" y="415.0" width="13.0" height="4.4" fill="#fbf6bd"/><rect x="456.1" y="415.0" width="14.0" height="4.4" fill="#fbf6bd"/><rect x="401.9" y="422.4" width="13.0" height="4.4" fill="#fbf6bd"/><rect x="456.1" y="422.4" width="14.0" height="4.4" fill="#fbf6bd"/><rect x="401.9" y="429.8" width="13.0" height="4.4" fill="#fbf6bd"/><rect x="456.1" y="429.8" width="14.0" height="4.4" fill="#fbf6bd"/><circle cx="423.3" cy="425.0" r="4.6" fill="#000"/><circle cx="423.3" cy="425.0" r="3.1" fill="none" stroke="#fbf6bd" stroke-width="1.4"/><rect x="373.0" y="456.2" width="15.0" height="11.0" fill="#fbf6bd"/><rect x="373.3" y="486.5" width="15.0" height="11.0" fill="#fbf6bd"/><circle cx="401.7" cy="491.7" r="4.6" fill="#000"/><circle cx="401.7" cy="491.7" r="3.1" fill="none" stroke="#fbf6bd" stroke-width="1.4"/><rect x="365.0" y="521.2" width="16.0" height="16.0" fill="#000"/><rect x="367.0" y="523.2" width="12.0" height="12.0" fill="#fbf6bd"/><circle cx="373.0" cy="529.2" r="2.6" fill="#000"/><circle cx="373.0" cy="544.7" r="7.5" fill="#000"/><circle cx="373.0" cy="544.7" r="5.5" fill="#fbf6bd"/><circle cx="373.0" cy="544.7" r="2.8" fill="#000"/><rect x="410.5" y="537.2" width="14.0" height="14.0" fill="#000"/><rect x="412.5" y="539.2" width="10.0" height="10.0" fill="#fbf6bd"/><circle cx="417.5" cy="544.2" r="2.5" fill="#000"/><circle cx="432.5" cy="544.2" r="7.3" fill="#000"/><circle cx="432.5" cy="544.2" r="5.3" fill="#fbf6bd"/><circle cx="432.5" cy="544.2" r="2.6" fill="#000"/><circle cx="447.5" cy="544.2" r="7.3" fill="#000"/><circle cx="447.5" cy="544.2" r="5.3" fill="#fbf6bd"/><circle cx="447.5" cy="544.2" r="2.6" fill="#000"/><circle cx="485.0" cy="529.2" r="8.0" fill="#000"/><circle cx="485.0" cy="529.2" r="6.0" fill="#fbf6bd"/><circle cx="485.0" cy="529.2" r="3.0" fill="#000"/><circle cx="500.0" cy="529.2" r="8.0" fill="#000"/><circle cx="500.0" cy="529.2" r="6.0" fill="#fbf6bd"/><circle cx="500.0" cy="529.2" r="3.0" fill="#000"/><circle cx="485.0" cy="544.2" r="8.0" fill="#000"/><circle cx="485.0" cy="544.2" r="6.0" fill="#fbf6bd"/><circle cx="485.0" cy="544.2" r="3.0" fill="#000"/><circle cx="500.0" cy="544.2" r="8.0" fill="#000"/><circle cx="500.0" cy="544.2" r="6.0" fill="#fbf6bd"/><circle cx="500.0" cy="544.2" r="3.0" fill="#000"/><rect x="484.8" y="488.8" width="7.0" height="9.0" fill="#fbf6bd"/><rect x="496.5" y="488.8" width="7.0" height="9.0" fill="#fbf6bd"/><rect x="484.8" y="500.8" width="7.0" height="9.0" fill="#fbf6bd"/><rect x="496.5" y="500.8" width="7.0" height="9.0" fill="#fbf6bd"/><circle cx="510.0" cy="505.3" r="4.6" fill="#000"/><circle cx="510.0" cy="505.3" r="3.1" fill="none" stroke="#fbf6bd" stroke-width="1.4"/><rect x="449.0" y="463.0" width="12.0" height="12.0" fill="#fbf6bd"/><rect x="479.0" y="463.0" width="12.0" height="12.0" fill="#fbf6bd"/><rect x="485.7" y="269.9" width="14.0" height="11.7" fill="#fbf6bd"/><rect x="485.7" y="299.9" width="14.0" height="11.7" fill="#fbf6bd"/><rect x="523.0" y="269.9" width="14.0" height="11.7" fill="#fbf6bd"/><rect x="523.0" y="299.9" width="14.0" height="11.7" fill="#fbf6bd"/><rect x="560.0" y="269.9" width="14.0" height="11.7" fill="#fbf6bd"/><rect x="560.0" y="299.9" width="14.0" height="11.7" fill="#fbf6bd"/><rect x="597.3" y="269.9" width="14.0" height="11.7" fill="#fbf6bd"/><rect x="597.3" y="299.9" width="14.0" height="11.7" fill="#fbf6bd"/><rect x="634.5" y="269.9" width="14.0" height="11.7" fill="#fbf6bd"/><rect x="634.5" y="299.9" width="14.0" height="11.7" fill="#fbf6bd"/><rect x="494.2" y="350.3" width="11.6" height="15.0" fill="#fbf6bd"/><rect x="524.2" y="350.3" width="11.6" height="15.0" fill="#fbf6bd"/><rect x="494.2" y="387.7" width="11.6" height="15.0" fill="#fbf6bd"/><rect x="524.2" y="387.7" width="11.6" height="15.0" fill="#fbf6bd"/><rect x="494.2" y="424.8" width="11.6" height="15.0" fill="#fbf6bd"/><rect x="524.2" y="424.8" width="11.6" height="15.0" fill="#fbf6bd"/><circle cx="552.5" cy="371.7" r="4.6" fill="#000"/><circle cx="552.5" cy="371.7" r="3.1" fill="none" stroke="#fbf6bd" stroke-width="1.4"/><path d="M592.5,432.5H686" stroke="#fbf6bd" stroke-width="6" stroke-dasharray="2.2 1.6"/><circle cx="599.7" cy="442.2" r="4.6" fill="#000"/><circle cx="599.7" cy="442.2" r="3.1" fill="none" stroke="#fbf6bd" stroke-width="1.4"/><rect x="708.0" y="387.7" width="9.0" height="9.0" fill="#fbf6bd"/><rect x="719.7" y="387.7" width="9.0" height="9.0" fill="#fbf6bd"/><rect x="708.0" y="400.5" width="9.0" height="9.0" fill="#fbf6bd"/><rect x="719.7" y="400.5" width="9.0" height="9.0" fill="#fbf6bd"/><rect x="708.0" y="415.0" width="9.0" height="9.0" fill="#fbf6bd"/><rect x="719.7" y="415.0" width="9.0" height="9.0" fill="#fbf6bd"/><circle cx="743.3" cy="392.2" r="4.6" fill="#000"/><circle cx="743.3" cy="392.2" r="3.1" fill="none" stroke="#fbf6bd" stroke-width="1.4"/><circle cx="748.3" cy="405.0" r="4.6" fill="#000"/><circle cx="748.3" cy="405.0" r="3.1" fill="none" stroke="#fbf6bd" stroke-width="1.4"/><circle cx="755.0" cy="419.5" r="4.6" fill="#000"/><circle cx="755.0" cy="419.5" r="3.1" fill="none" stroke="#fbf6bd" stroke-width="1.4"/><circle cx="665.0" cy="420.8" r="4.6" fill="#000"/><circle cx="665.0" cy="420.8" r="3.1" fill="none" stroke="#fbf6bd" stroke-width="1.4"/><circle cx="686.7" cy="432.5" r="4.6" fill="#000"/><circle cx="686.7" cy="432.5" r="3.1" fill="none" stroke="#fbf6bd" stroke-width="1.4"/><circle cx="696.7" cy="432.0" r="4.6" fill="#000"/><circle cx="696.7" cy="432.0" r="3.1" fill="none" stroke="#fbf6bd" stroke-width="1.4"/><circle cx="705.0" cy="432.0" r="4.6" fill="#000"/><circle cx="705.0" cy="432.0" r="3.1" fill="none" stroke="#fbf6bd" stroke-width="1.4"/><circle cx="735.8" cy="432.5" r="4.6" fill="#000"/><circle cx="735.8" cy="432.5" r="3.1" fill="none" stroke="#fbf6bd" stroke-width="1.4"/><rect x="685.0" y="271.8" width="9.0" height="8.0" fill="#fbf6bd"/><rect x="685.0" y="284.0" width="9.0" height="8.0" fill="#fbf6bd"/><rect x="680.9" y="305.9" width="11.7" height="14.2" fill="#fbf6bd"/><rect x="710.9" y="305.9" width="11.7" height="14.2" fill="#fbf6bd"/><rect x="680.9" y="342.9" width="11.7" height="14.5" fill="#fbf6bd"/><rect x="710.9" y="342.9" width="11.7" height="14.5" fill="#fbf6bd"/><circle cx="705.0" cy="361.3" r="4.6" fill="#000"/><circle cx="705.0" cy="361.3" r="3.1" fill="none" stroke="#fbf6bd" stroke-width="1.4"/><circle cx="716.7" cy="331.7" r="4.6" fill="#000"/><circle cx="716.7" cy="331.7" r="3.1" fill="none" stroke="#fbf6bd" stroke-width="1.4"/><rect x="752" y="289" width="47" height="18" rx="8" fill="#000"/><rect x="752" y="318.5" width="47" height="18" rx="8" fill="#000"/><circle cx="760.8" cy="298" r="6.2" fill="#2ad0c0"/><circle cx="760.8" cy="298" r="2.8" fill="#000"/><circle cx="775.8" cy="298" r="6.2" fill="#2ad0c0"/><circle cx="775.8" cy="298" r="2.8" fill="#000"/><circle cx="760.8" cy="327.5" r="6.2" fill="#2ad0c0"/><circle cx="760.8" cy="327.5" r="2.8" fill="#000"/><circle cx="775.8" cy="327.5" r="6.2" fill="#2ad0c0"/><circle cx="775.8" cy="327.5" r="2.8" fill="#000"/><circle cx="790.8" cy="327.5" r="6.2" fill="#2ad0c0"/><circle cx="790.8" cy="327.5" r="2.8" fill="#000"/><rect x="784.8" y="292" width="12" height="12" fill="#10c010"/><circle cx="790.8" cy="298" r="2.6" fill="#000"/><circle cx="816.7" cy="327.5" r="4.6" fill="#000"/><circle cx="816.7" cy="327.5" r="3.1" fill="none" stroke="#fbf6bd" stroke-width="1.4"/><circle cx="842.4" cy="327.3" r="7.6" fill="#000"/><circle cx="842.4" cy="327.3" r="5.4" fill="#fbf6bd"/><circle cx="842.4" cy="327.3" r="2.7" fill="#000"/><circle cx="857.8" cy="327.3" r="7.6" fill="#000"/><circle cx="857.8" cy="327.3" r="5.4" fill="#fbf6bd"/><circle cx="857.8" cy="327.3" r="2.7" fill="#000"/><circle cx="873.0" cy="327.3" r="7.6" fill="#000"/><circle cx="873.0" cy="327.3" r="5.4" fill="#fbf6bd"/><circle cx="873.0" cy="327.3" r="2.7" fill="#000"/><rect x="880.4" y="319.6" width="15.4" height="15.4" fill="#000"/><rect x="882.6" y="321.8" width="11.0" height="11.0" fill="#fbf6bd"/><circle cx="888.1" cy="327.3" r="2.6" fill="#000"/><circle cx="857.8" cy="343.2" r="7.6" fill="#000"/><circle cx="857.8" cy="343.2" r="5.4" fill="#fbf6bd"/><circle cx="857.8" cy="343.2" r="2.7" fill="#000"/><circle cx="873.0" cy="343.2" r="7.6" fill="#000"/><circle cx="873.0" cy="343.2" r="5.4" fill="#fbf6bd"/><circle cx="873.0" cy="343.2" r="2.7" fill="#000"/><circle cx="831.5" cy="312.7" r="4.6" fill="#000"/><circle cx="831.5" cy="312.7" r="3.1" fill="none" stroke="#fbf6bd" stroke-width="1.4"/><circle cx="853.5" cy="355.5" r="4.6" fill="#000"/><circle cx="853.5" cy="355.5" r="3.1" fill="none" stroke="#fbf6bd" stroke-width="1.4"/><circle cx="862.0" cy="357.0" r="4.6" fill="#000"/><circle cx="862.0" cy="357.0" r="3.1" fill="none" stroke="#fbf6bd" stroke-width="1.4"/><circle cx="789.2" cy="370.8" r="4.6" fill="#000"/><circle cx="789.2" cy="370.8" r="3.1" fill="none" stroke="#fbf6bd" stroke-width="1.4"/><rect x="763.8" y="405.8" width="9.0" height="7.5" fill="#fbf6bd"/><rect x="763.8" y="416.8" width="9.0" height="7.5" fill="#fbf6bd"/><rect x="779.2" y="405.8" width="9.0" height="7.5" fill="#fbf6bd"/><rect x="779.2" y="416.8" width="9.0" height="7.5" fill="#fbf6bd"/><rect x="793.5" y="405.8" width="9.0" height="7.5" fill="#fbf6bd"/><rect x="793.5" y="416.8" width="9.0" height="7.5" fill="#fbf6bd"/><rect x="808.0" y="405.8" width="9.0" height="7.5" fill="#fbf6bd"/><rect x="808.0" y="416.8" width="9.0" height="7.5" fill="#fbf6bd"/><rect x="822.2" y="405.8" width="9.0" height="7.5" fill="#fbf6bd"/><rect x="822.2" y="416.8" width="9.0" height="7.5" fill="#fbf6bd"/><rect x="839.2" y="405.8" width="9.0" height="7.5" fill="#fbf6bd"/><rect x="839.2" y="416.8" width="9.0" height="7.5" fill="#fbf6bd"/><circle cx="770.0" cy="398.3" r="4.6" fill="#000"/><circle cx="770.0" cy="398.3" r="3.1" fill="none" stroke="#fbf6bd" stroke-width="1.4"/><circle cx="789.2" cy="398.0" r="4.6" fill="#000"/><circle cx="789.2" cy="398.0" r="3.1" fill="none" stroke="#fbf6bd" stroke-width="1.4"/><circle cx="803.3" cy="390.0" r="4.6" fill="#000"/><circle cx="803.3" cy="390.0" r="3.1" fill="none" stroke="#fbf6bd" stroke-width="1.4"/><rect x="865.5" y="405.5" width="8.5" height="9.0" fill="#fbf6bd"/><rect x="876.0" y="405.5" width="8.5" height="9.0" fill="#fbf6bd"/><rect x="865.5" y="428.0" width="8.5" height="9.0" fill="#fbf6bd"/><rect x="876.0" y="428.0" width="8.5" height="9.0" fill="#fbf6bd"/><rect x="865.5" y="449.7" width="8.5" height="9.0" fill="#fbf6bd"/><rect x="876.0" y="449.7" width="8.5" height="9.0" fill="#fbf6bd"/><rect x="865.5" y="470.5" width="8.5" height="9.0" fill="#fbf6bd"/><rect x="876.0" y="470.5" width="8.5" height="9.0" fill="#fbf6bd"/><rect x="907.0" y="406.7" width="6.0" height="6.0" fill="#fbf6bd"/><rect x="907.0" y="418.3" width="6.0" height="6.0" fill="#fbf6bd"/><rect x="907.0" y="429.0" width="6.0" height="6.0" fill="#fbf6bd"/><rect x="907.0" y="441.2" width="6.0" height="6.0" fill="#fbf6bd"/><rect x="907.0" y="451.7" width="6.0" height="6.0" fill="#fbf6bd"/><rect x="907.0" y="462.8" width="6.0" height="6.0" fill="#fbf6bd"/><rect x="922.0" y="411.5" width="6.0" height="7.0" fill="#fbf6bd"/><rect x="922.0" y="434.0" width="6.0" height="7.0" fill="#fbf6bd"/><rect x="922.0" y="456.5" width="6.0" height="7.0" fill="#fbf6bd"/><circle cx="900.0" cy="421.3" r="4.6" fill="#000"/><circle cx="900.0" cy="421.3" r="3.1" fill="none" stroke="#fbf6bd" stroke-width="1.4"/><circle cx="891.7" cy="444.2" r="4.6" fill="#000"/><circle cx="891.7" cy="444.2" r="3.1" fill="none" stroke="#fbf6bd" stroke-width="1.4"/><circle cx="901.7" cy="465.8" r="4.6" fill="#000"/><circle cx="901.7" cy="465.8" r="3.1" fill="none" stroke="#fbf6bd" stroke-width="1.4"/><circle cx="853.3" cy="450.8" r="4.6" fill="#000"/><circle cx="853.3" cy="450.8" r="3.1" fill="none" stroke="#fbf6bd" stroke-width="1.4"/><circle cx="861.7" cy="460.8" r="4.6" fill="#000"/><circle cx="861.7" cy="460.8" r="3.1" fill="none" stroke="#fbf6bd" stroke-width="1.4"/><rect x="776.1" y="449.2" width="2.8" height="9.2" fill="#fbf6bd"/><rect x="776.1" y="513.3" width="2.8" height="9.2" fill="#fbf6bd"/><rect x="764.1" y="461.1" width="9.2" height="2.8" fill="#fbf6bd"/><rect x="828.3" y="461.1" width="9.2" height="2.8" fill="#fbf6bd"/><rect x="780.8" y="449.2" width="2.8" height="9.2" fill="#fbf6bd"/><rect x="780.8" y="513.3" width="2.8" height="9.2" fill="#fbf6bd"/><rect x="764.1" y="465.9" width="9.2" height="2.8" fill="#fbf6bd"/><rect x="828.3" y="465.9" width="9.2" height="2.8" fill="#fbf6bd"/><rect x="785.4" y="449.2" width="2.8" height="9.2" fill="#fbf6bd"/><rect x="785.4" y="513.3" width="2.8" height="9.2" fill="#fbf6bd"/><rect x="764.1" y="470.6" width="9.2" height="2.8" fill="#fbf6bd"/><rect x="828.3" y="470.6" width="9.2" height="2.8" fill="#fbf6bd"/><rect x="790.1" y="449.2" width="2.8" height="9.2" fill="#fbf6bd"/><rect x="790.1" y="513.3" width="2.8" height="9.2" fill="#fbf6bd"/><rect x="764.1" y="475.4" width="9.2" height="2.8" fill="#fbf6bd"/><rect x="828.3" y="475.4" width="9.2" height="2.8" fill="#fbf6bd"/><rect x="794.8" y="449.2" width="2.8" height="9.2" fill="#fbf6bd"/><rect x="794.8" y="513.3" width="2.8" height="9.2" fill="#fbf6bd"/><rect x="764.1" y="480.1" width="9.2" height="2.8" fill="#fbf6bd"/><rect x="828.3" y="480.1" width="9.2" height="2.8" fill="#fbf6bd"/><rect x="799.5" y="449.2" width="2.8" height="9.2" fill="#fbf6bd"/><rect x="799.5" y="513.3" width="2.8" height="9.2" fill="#fbf6bd"/><rect x="764.1" y="484.9" width="9.2" height="2.8" fill="#fbf6bd"/><rect x="828.3" y="484.9" width="9.2" height="2.8" fill="#fbf6bd"/><rect x="804.1" y="449.2" width="2.8" height="9.2" fill="#fbf6bd"/><rect x="804.1" y="513.3" width="2.8" height="9.2" fill="#fbf6bd"/><rect x="764.1" y="489.6" width="9.2" height="2.8" fill="#fbf6bd"/><rect x="828.3" y="489.6" width="9.2" height="2.8" fill="#fbf6bd"/><rect x="808.8" y="449.2" width="2.8" height="9.2" fill="#fbf6bd"/><rect x="808.8" y="513.3" width="2.8" height="9.2" fill="#fbf6bd"/><rect x="764.1" y="494.4" width="9.2" height="2.8" fill="#fbf6bd"/><rect x="828.3" y="494.4" width="9.2" height="2.8" fill="#fbf6bd"/><rect x="813.5" y="449.2" width="2.8" height="9.2" fill="#fbf6bd"/><rect x="813.5" y="513.3" width="2.8" height="9.2" fill="#fbf6bd"/><rect x="764.1" y="499.1" width="9.2" height="2.8" fill="#fbf6bd"/><rect x="828.3" y="499.1" width="9.2" height="2.8" fill="#fbf6bd"/><rect x="818.1" y="449.2" width="2.8" height="9.2" fill="#fbf6bd"/><rect x="818.1" y="513.3" width="2.8" height="9.2" fill="#fbf6bd"/><rect x="764.1" y="503.9" width="9.2" height="2.8" fill="#fbf6bd"/><rect x="828.3" y="503.9" width="9.2" height="2.8" fill="#fbf6bd"/><rect x="822.8" y="449.2" width="2.8" height="9.2" fill="#fbf6bd"/><rect x="822.8" y="513.3" width="2.8" height="9.2" fill="#fbf6bd"/><rect x="764.1" y="508.6" width="9.2" height="2.8" fill="#fbf6bd"/><rect x="828.3" y="508.6" width="9.2" height="2.8" fill="#fbf6bd"/><circle cx="800.8" cy="485.8" r="4.6" fill="#000"/><circle cx="800.8" cy="485.8" r="3.1" fill="none" stroke="#fbf6bd" stroke-width="1.4"/><circle cx="816.7" cy="475.0" r="4.6" fill="#000"/><circle cx="816.7" cy="475.0" r="3.1" fill="none" stroke="#fbf6bd" stroke-width="1.4"/><circle cx="735.8" cy="457.5" r="4.6" fill="#000"/><circle cx="735.8" cy="457.5" r="3.1" fill="none" stroke="#fbf6bd" stroke-width="1.4"/><circle cx="748.3" cy="459.2" r="4.6" fill="#000"/><circle cx="748.3" cy="459.2" r="3.1" fill="none" stroke="#fbf6bd" stroke-width="1.4"/><circle cx="757.5" cy="459.2" r="4.6" fill="#000"/><circle cx="757.5" cy="459.2" r="3.1" fill="none" stroke="#fbf6bd" stroke-width="1.4"/><circle cx="752.5" cy="471.7" r="4.6" fill="#000"/><circle cx="752.5" cy="471.7" r="3.1" fill="none" stroke="#fbf6bd" stroke-width="1.4"/><circle cx="736.7" cy="506.7" r="4.6" fill="#000"/><circle cx="736.7" cy="506.7" r="3.1" fill="none" stroke="#fbf6bd" stroke-width="1.4"/><circle cx="740.8" cy="517.5" r="4.6" fill="#000"/><circle cx="740.8" cy="517.5" r="3.1" fill="none" stroke="#fbf6bd" stroke-width="1.4"/><circle cx="725.0" cy="476.0" r="4.6" fill="#000"/><circle cx="725.0" cy="476.0" r="3.1" fill="none" stroke="#fbf6bd" stroke-width="1.4"/><circle cx="853.3" cy="450.8" r="4.6" fill="#000"/><circle cx="853.3" cy="450.8" r="3.1" fill="none" stroke="#fbf6bd" stroke-width="1.4"/><circle cx="852.5" cy="495.0" r="4.6" fill="#000"/><circle cx="852.5" cy="495.0" r="3.1" fill="none" stroke="#fbf6bd" stroke-width="1.4"/><circle cx="845.8" cy="510.8" r="4.6" fill="#000"/><circle cx="845.8" cy="510.8" r="3.1" fill="none" stroke="#fbf6bd" stroke-width="1.4"/><circle cx="834.2" cy="518.3" r="4.6" fill="#000"/><circle cx="834.2" cy="518.3" r="3.1" fill="none" stroke="#fbf6bd" stroke-width="1.4"/><circle cx="844.2" cy="520.8" r="4.6" fill="#000"/><circle cx="844.2" cy="520.8" r="3.1" fill="none" stroke="#fbf6bd" stroke-width="1.4"/><circle cx="760.9" cy="544.5" r="7.6" fill="#000"/><circle cx="760.9" cy="544.5" r="5.6" fill="#fbf6bd"/><circle cx="760.9" cy="544.5" r="2.8" fill="#000"/><rect x="768.9" y="537.0" width="15.0" height="15.0" fill="#000"/><rect x="770.9" y="539.0" width="11.0" height="11.0" fill="#fbf6bd"/><circle cx="776.4" cy="544.5" r="2.6" fill="#000"/><rect x="797.7" y="536.7" width="6.0" height="9.0" fill="#fbf6bd"/><rect x="808.4" y="535.7" width="6.0" height="9.0" fill="#fbf6bd"/><rect x="888.0" y="500.3" width="10.0" height="4.0" fill="#fbf6bd"/><rect x="921.0" y="500.3" width="10.0" height="4.0" fill="#fbf6bd"/><rect x="888.0" y="507.5" width="10.0" height="4.0" fill="#fbf6bd"/><rect x="921.0" y="507.5" width="10.0" height="4.0" fill="#fbf6bd"/><rect x="888.0" y="515.2" width="10.0" height="4.0" fill="#fbf6bd"/><rect x="921.0" y="515.2" width="10.0" height="4.0" fill="#fbf6bd"/><rect x="888.0" y="522.2" width="10.0" height="4.0" fill="#fbf6bd"/><rect x="921.0" y="522.2" width="10.0" height="4.0" fill="#fbf6bd"/><circle cx="910.0" cy="513.0" r="4.6" fill="#000"/><circle cx="910.0" cy="513.0" r="3.1" fill="none" stroke="#fbf6bd" stroke-width="1.4"/><circle cx="880.5" cy="524.2" r="4.6" fill="#000"/><circle cx="880.5" cy="524.2" r="3.1" fill="none" stroke="#fbf6bd" stroke-width="1.4"/><circle cx="835.0" cy="521.0" r="4.6" fill="#000"/><circle cx="835.0" cy="521.0" r="3.1" fill="none" stroke="#fbf6bd" stroke-width="1.4"/><rect x="567.5" y="464.2" width="15.0" height="11.6" fill="#fbf6bd"/><rect x="567.5" y="494.2" width="15.0" height="11.6" fill="#fbf6bd"/><rect x="604.5" y="464.2" width="15.0" height="11.6" fill="#fbf6bd"/><rect x="604.5" y="494.2" width="15.0" height="11.6" fill="#fbf6bd"/><rect x="641.5" y="464.2" width="15.0" height="11.6" fill="#fbf6bd"/><rect x="641.5" y="494.2" width="15.0" height="11.6" fill="#fbf6bd"/><circle cx="637.2" cy="451.3" r="4.6" fill="#000"/><circle cx="637.2" cy="451.3" r="3.1" fill="none" stroke="#fbf6bd" stroke-width="1.4"/><circle cx="554.2" cy="533.3" r="8.0" fill="#000"/><circle cx="554.2" cy="533.3" r="5.8" fill="#fbf6bd"/><circle cx="554.2" cy="533.3" r="2.9" fill="#000"/><rect x="560.5" y="525.1" width="16.4" height="16.4" fill="#000"/><rect x="562.7" y="527.3" width="12.0" height="12.0" fill="#fbf6bd"/><circle cx="568.7" cy="533.3" r="2.6" fill="#000"/><circle cx="594.2" cy="517.0" r="4.6" fill="#000"/><circle cx="594.2" cy="517.0" r="3.1" fill="none" stroke="#fbf6bd" stroke-width="1.4"/><circle cx="584.2" cy="527.0" r="4.6" fill="#000"/><circle cx="584.2" cy="527.0" r="3.1" fill="none" stroke="#fbf6bd" stroke-width="1.4"/><circle cx="583.7" cy="540.0" r="4.6" fill="#000"/><circle cx="583.7" cy="540.0" r="3.1" fill="none" stroke="#fbf6bd" stroke-width="1.4"/><rect x="611.7" y="531.2" width="6.0" height="6.0" fill="#fbf6bd"/><rect x="597.8" y="537.5" width="6.0" height="5.0" fill="#fbf6bd"/><rect x="612.0" y="542.8" width="6.0" height="6.0" fill="#fbf6bd"/><rect x="623.5" y="531.0" width="9.0" height="8.0" fill="#fbf6bd"/><rect x="623.5" y="542.7" width="9.0" height="8.0" fill="#fbf6bd"/><rect x="652.5" y="531.0" width="31.0" height="12.0" fill="#fbf6bd"/><rect x="706.5" y="531.0" width="31.0" height="12.0" fill="#fbf6bd"/><rect x="668.7" y="503.5" width="6.0" height="8.0" fill="#fbf6bd"/><rect x="679.5" y="503.5" width="6.0" height="8.0" fill="#fbf6bd"/><rect x="709.5" y="501.8" width="6.0" height="8.0" fill="#fbf6bd"/><rect x="721.2" y="501.8" width="6.0" height="8.0" fill="#fbf6bd"/>
<g fill="none" stroke-linejoin="round"><rect x="406.6" y="305.3" width="52.3" height="60.4" fill="none" stroke="#24a824" stroke-width="1.8"/><rect x="357.6" y="387.5" width="31.0" height="60.0" fill="none" stroke="#24a824" stroke-width="1.8"/><path d="M376.0,451.0H385.0M380.5,446.5V455.5" fill="none" stroke="#24a824" stroke-width="1.4"/><rect x="417.2" y="375.3" width="37.2" height="61.9" fill="none" stroke="#24a824" stroke-width="1.8"/><path d="M430,437.2Q434.8,431 439.6,437.2" fill="none" stroke="#24a824" stroke-width="1.2"/><rect x="365.2" y="454.5" width="30.6" height="45.5" fill="none" stroke="#24a824" stroke-width="1.8"/><path d="M374.5,477.0H386.5M380.5,471.0V483.0" stroke="#76735e" stroke-width="1.1" fill="none"/><rect x="357.8" y="510.3" width="31.4" height="53.0" fill="none" stroke="#24a824" stroke-width="1.8"/><rect x="402.0" y="528.3" width="61.7" height="29.2" fill="none" stroke="#24a824" stroke-width="1.8"/><path d="M402,529H416" fill="none" stroke="#3cd03c" stroke-width="2.5"/><rect x="470.0" y="514.2" width="45.8" height="45.8" fill="none" stroke="#24a824" stroke-width="1.8"/><rect x="446.7" y="454.8" width="46.2" height="29.4" fill="none" stroke="#24a824" stroke-width="1.8"/><path d="M464.0,469.0H476.0M470.0,463.0V475.0" stroke="#76735e" stroke-width="1.1" fill="none"/><path d="M432.5,469.0H441.5M437.0,464.5V473.5" fill="none" stroke="#24a824" stroke-width="1.4"/><rect x="477.5" y="268.3" width="30.4" height="45.0" fill="none" stroke="#24a824" stroke-width="1.8"/><path d="M486.2,290.8H499.2M492.7,284.3V297.3" stroke="#76735e" stroke-width="1.1" fill="none"/><path d="M488.2,262.5H497.2M492.7,258.0V267.0" fill="none" stroke="#24a824" stroke-width="1.4"/><rect x="514.8" y="268.3" width="30.4" height="45.0" fill="none" stroke="#24a824" stroke-width="1.8"/><path d="M523.5,290.8H536.5M530.0,284.3V297.3" stroke="#76735e" stroke-width="1.1" fill="none"/><path d="M525.5,262.5H534.5M530.0,258.0V267.0" fill="none" stroke="#24a824" stroke-width="1.4"/><rect x="551.8" y="268.3" width="30.4" height="45.0" fill="none" stroke="#24a824" stroke-width="1.8"/><path d="M560.5,290.8H573.5M567.0,284.3V297.3" stroke="#76735e" stroke-width="1.1" fill="none"/><path d="M562.5,262.5H571.5M567.0,258.0V267.0" fill="none" stroke="#24a824" stroke-width="1.4"/><rect x="589.1" y="268.3" width="30.4" height="45.0" fill="none" stroke="#24a824" stroke-width="1.8"/><path d="M597.8,290.8H610.8M604.3,284.3V297.3" stroke="#76735e" stroke-width="1.1" fill="none"/><path d="M599.8,262.5H608.8M604.3,258.0V267.0" fill="none" stroke="#24a824" stroke-width="1.4"/><rect x="626.3" y="268.3" width="30.4" height="45.0" fill="none" stroke="#24a824" stroke-width="1.8"/><path d="M635.0,290.8H648.0M641.5,284.3V297.3" stroke="#76735e" stroke-width="1.1" fill="none"/><path d="M637.0,262.5H646.0M641.5,258.0V267.0" fill="none" stroke="#24a824" stroke-width="1.4"/><rect x="492.5" y="342.5" width="45.0" height="30.5" fill="none" stroke="#24a824" stroke-width="1.8"/><path d="M509.0,357.8H521.0M515.0,351.8V363.8" stroke="#76735e" stroke-width="1.1" fill="none"/><rect x="492.5" y="379.7" width="45.0" height="30.0" fill="none" stroke="#24a824" stroke-width="1.8"/><path d="M509.0,395.2H521.0M515.0,389.2V401.2" stroke="#76735e" stroke-width="1.1" fill="none"/><rect x="492.5" y="416.7" width="45.0" height="30.3" fill="none" stroke="#24a824" stroke-width="1.8"/><path d="M509.0,432.3H521.0M515.0,426.3V438.3" stroke="#76735e" stroke-width="1.1" fill="none"/><path d="M538.8,357.5H547.8M543.3,353.0V362.0" fill="none" stroke="#24a824" stroke-width="1.4"/><path d="M538.5,394.5H547.5M543.0,390.0V399.0" fill="none" stroke="#24a824" stroke-width="1.4"/><path d="M482.2,433.0H491.2M486.7,428.5V437.5" fill="none" stroke="#24a824" stroke-width="1.4"/><rect x="588.7" y="402.5" width="97.1" height="25.8" fill="none" stroke="#24a824" stroke-width="1.8"/><path d="M588.7,429.5H700" stroke="#30d030" stroke-width="2"/><rect x="679.7" y="298.7" width="45.0" height="29.3" fill="none" stroke="#24a824" stroke-width="1.8"/><path d="M695.7,313.5H707.7M701.7,307.5V319.5" stroke="#76735e" stroke-width="1.1" fill="none"/><path d="M668.8,313.0H677.8M673.3,308.5V317.5" fill="none" stroke="#24a824" stroke-width="1.4"/><rect x="679.7" y="334.7" width="45.0" height="30.3" fill="none" stroke="#24a824" stroke-width="1.8"/><path d="M695.7,350.0H707.7M701.7,344.0V356.0" stroke="#76735e" stroke-width="1.1" fill="none"/><path d="M668.8,350.0H677.8M673.3,345.5V354.5" fill="none" stroke="#24a824" stroke-width="1.4"/><rect x="745.8" y="279.7" width="60.9" height="66.6" fill="none" stroke="#36c0b0" stroke-width="1.6"/><path d="M768,279.7H806.7V300" fill="none" stroke="#38c038" stroke-width="1.8"/><rect x="828.2" y="309.2" width="74.9" height="52.1" fill="none" stroke="#24a824" stroke-width="1.8"/><rect x="775.0" y="460.0" width="51.7" height="51.3" fill="none" stroke="#24a824" stroke-width="1.8"/><rect x="742.4" y="529.5" width="53.5" height="29.2" fill="none" stroke="#24a824" stroke-width="1.8"/><rect x="900.0" y="498.4" width="19.4" height="30.1" fill="none" stroke="#24a824" stroke-width="1.8"/><path d="M569.0,485.0H581.0M575.0,479.0V491.0" stroke="#76735e" stroke-width="1.1" fill="none"/><path d="M606.0,485.0H618.0M612.0,479.0V491.0" stroke="#76735e" stroke-width="1.1" fill="none"/><path d="M643.0,485.0H655.0M649.0,479.0V491.0" stroke="#76735e" stroke-width="1.1" fill="none"/><rect x="559.2" y="462.5" width="30.8" height="45.0" fill="none" stroke="#24a824" stroke-width="1.8"/><path d="M570.0,457.0H579.0M574.5,452.5V461.5" fill="none" stroke="#24a824" stroke-width="1.4"/><rect x="596.7" y="462.5" width="30.0" height="45.0" fill="none" stroke="#24a824" stroke-width="1.8"/><path d="M633.3,462.5H658L665,470V505L650,517H633.3Z" fill="none" stroke="#24a824" stroke-width="1.8"/><path d="M606.5,513.0H615.5M611.0,508.5V517.5" fill="none" stroke="#24a824" stroke-width="1.4"/><path d="M644.5,513.0H653.5M649.0,508.5V517.5" fill="none" stroke="#24a824" stroke-width="1.4"/><rect x="535.0" y="517.5" width="53.3" height="31.7" fill="none" stroke="#24a824" stroke-width="1.8"/><path d="M600,546H612" fill="none" stroke="#30d030" stroke-width="2"/><path d="M661,550H742" fill="none" stroke="#30d030" stroke-width="2"/><path d="M660,522H740" fill="none" stroke="#24a824" stroke-width="1.2"/></g>
<g fill="none" stroke="#24a824" stroke-width="1.4"><rect x="264.2" y="308.9" width="73.1" height="181.4"/><path d="M281.7,308.9V490.3M281.7,358.9H337.3M281.7,440.8H337.3"/><path d="M264.2,344L259,347H236Q232,347 232,351V449Q232,453 236,453H259L264.2,456"/></g>
<g fill="#24a824" stroke="#24a824" stroke-width="0.35" font-family="Liberation Sans"><text transform="translate(344 345) scale(0.9 1)" font-size="11.4">J7</text><text transform="translate(426.0 303.0) scale(0.9 1)" font-size="11.8">J4</text><text transform="translate(365.0 384.0) scale(0.9 1)" font-size="11.8">J10</text><text transform="translate(465.0 372.0) scale(0.9 1)" font-size="11.8">U3</text><text transform="translate(396.0 460.0) scale(0.9 1)" font-size="11.8">C17</text><text transform="translate(392.0 519.0) scale(0.9 1)" font-size="11.8">J11</text><text transform="translate(425.0 525.0) scale(0.9 1)" font-size="11.8">U8</text><text transform="translate(517.0 511.0) scale(0.9 1)" font-size="11.8">J5</text><text transform="translate(465.0 497.0) scale(0.9 1)" font-size="11.8">C2</text><text transform="translate(465.0 509.0) scale(0.9 1)" font-size="11.8">C6</text><text transform="translate(458.0 453.0) scale(0.9 1)" font-size="11.8">C20</text><text transform="translate(485.2 255.5) scale(0.9 1)" font-size="11.8">C8</text><text transform="translate(520.0 255.5) scale(0.9 1)" font-size="11.8">C10</text><text transform="translate(559.5 255.5) scale(0.9 1)" font-size="11.8">C7</text><text transform="translate(596.8 255.5) scale(0.9 1)" font-size="11.8">C5</text><text transform="translate(634.0 255.5) scale(0.9 1)" font-size="11.8">C4</text><text transform="translate(505.0 347.0) scale(0.9 1)" font-size="10.3">C24</text><text transform="translate(540.0 384.5) scale(0.9 1)" font-size="11.8">C21</text><text transform="translate(540.0 423.0) scale(0.9 1)" font-size="11.8">C18</text><text transform="translate(631.0 400.0) scale(0.9 1)" font-size="11.8">U1</text><text transform="translate(733.0 388.2) scale(0.9 1)" font-size="10.3">R5</text><text transform="translate(733.0 401.0) scale(0.9 1)" font-size="10.3">R6</text><text transform="translate(733.0 415.5) scale(0.9 1)" font-size="10.3">R7</text><text transform="translate(681.0 290.0) rotate(-90) scale(0.9 1)" font-size="10.3">R2</text><text transform="translate(697.5 296.0) scale(0.9 1)" font-size="11.8">C3</text><text transform="translate(688.0 378.0) scale(0.9 1)" font-size="11.8">C16</text><text transform="translate(773.0 275.0) scale(0.9 1)" font-size="11.8">J2</text><text transform="translate(859.0 306.0) scale(0.9 1)" font-size="11.8">J8</text><text transform="translate(772.3 403.0) rotate(-90) scale(0.9 1)" font-size="10.3">R22</text><text transform="translate(787.7 403.0) rotate(-90) scale(0.9 1)" font-size="10.3">R11</text><text transform="translate(802.0 403.0) rotate(-90) scale(0.9 1)" font-size="10.3">R2</text><text transform="translate(816.5 403.0) rotate(-90) scale(0.9 1)" font-size="10.3">R3</text><text transform="translate(830.7 403.0) rotate(-90) scale(0.9 1)" font-size="10.3">R4</text><text transform="translate(847.7 403.0) rotate(-90) scale(0.9 1)" font-size="10.3">R3</text><text transform="translate(866.0 401.0) scale(0.9 1)" font-size="10.3">R13</text><text transform="translate(866.0 445.0) scale(0.9 1)" font-size="10.3">R14</text><text transform="translate(866.0 423.0) scale(0.9 1)" font-size="10.3">R10</text><text transform="translate(890.0 418.0) scale(0.9 1)" font-size="10.3">C9</text><text transform="translate(890.0 440.0) scale(0.9 1)" font-size="10.3">C8</text><text transform="translate(796.0 447.0) scale(0.9 1)" font-size="11.8">U2</text><text transform="translate(762.0 526.0) scale(0.9 1)" font-size="10.3">J6</text><text transform="translate(905.0 494.0) scale(0.9 1)" font-size="10.3">U4</text><text transform="translate(566.0 449.0) scale(0.9 1)" font-size="11.8">C15</text><text transform="translate(604.0 459.0) scale(0.9 1)" font-size="10.3">C14</text><text transform="translate(642.0 459.0) scale(0.9 1)" font-size="10.3">C11</text><text transform="translate(543.0 514.0) scale(0.9 1)" font-size="11.8">J3</text><text transform="translate(603.0 528.0) scale(0.9 1)" font-size="10.3">Q1</text><text transform="translate(622.0 528.0) scale(0.9 1)" font-size="10.3">R15</text><text transform="translate(673.0 497.0) scale(0.9 1)" font-size="10.3">R9</text><text transform="translate(706.0 495.0) scale(0.9 1)" font-size="10.3">C13</text><text transform="translate(690.0 519.0) scale(0.9 1)" font-size="10.3">X1</text><text transform="translate(658.0 525.0) scale(0.9 1)" font-size="9.3">C12</text></g>
<g transform="translate(803 277) scale(0.8) translate(-803 -277)"><path d="M803,279.5Q803,277 805,277Q807,277 807,279.5V287Q808,285.5 810,286.3Q811.5,287 811.5,289Q813,288 814.5,289Q815.5,290 815.5,291.5Q817,291 818,292Q819,293 819,295V300Q819,305 816,308H806Q804,306 802,302L798,295Q797,293 799,292.5Q800.5,292 802,294L803,296Z" fill="#fff" stroke="#111" stroke-width="1.2"/></g>
</svg><!--/PCB-->
<div class="a" style="left:954px;top:144px;width:19px;height:521px;background:#f4f4f4"></div>
<div class="a" style="left:222px;top:665px;width:751px;height:19px;background:#f4f4f4"></div>
<div class="a" style="left:955px;top:144px;width:18px;height:18px;background:#f0f0f0;border:1px solid #fff;border-right:2px solid #7a7a7a;border-bottom:2px solid #7a7a7a"></div>
<div class="a" style="left:955px;top:647px;width:18px;height:18px;background:#f0f0f0;border:1px solid #fff;border-right:2px solid #7a7a7a;border-bottom:2px solid #7a7a7a"></div>
<div class="a" style="left:955px;top:384px;width:18px;height:19px;background:#f0f0f0;border:1px solid #fff;border-right:2px solid #7a7a7a;border-bottom:2px solid #7a7a7a"></div>
<div class="a" style="left:222px;top:666px;width:17px;height:18px;background:#f0f0f0;border:1px solid #fff;border-right:2px solid #7a7a7a;border-bottom:2px solid #7a7a7a"></div>
<div class="a" style="left:937px;top:666px;width:17px;height:18px;background:#f0f0f0;border:1px solid #fff;border-right:2px solid #7a7a7a;border-bottom:2px solid #7a7a7a"></div>
<div class="a" style="left:521px;top:666px;width:18px;height:18px;background:#f0f0f0;border:1px solid #fff;border-right:2px solid #7a7a7a;border-bottom:2px solid #7a7a7a"></div>
<svg class="a" style="left:0;top:0" width="1280" height="720"><path d="M959,156H968L963.5,151.5Z" fill="#000"/><path d="M959,654H968L963.5,658.5Z" fill="#000"/><path d="M233,670.5V679.5L228.5,675Z" fill="#000"/><path d="M943,670.5V679.5L947.5,675Z" fill="#000"/></svg>

<div class="a" style="left:976px;top:165px;width:223px;height:306px;border-top:1px solid #fff;border-left:1px solid #fff;border-right:2px solid #8a8a8a;border-bottom:2px solid #8a8a8a"></div>
<div class="a" style="left:977px;top:143px;width:48px;height:24px;background:#f0f0f0;border-top:1px solid #fff;border-left:1px solid #fff;border-right:2px solid #8a8a8a"></div>
<div class="a" style="left:1027px;top:146px;width:48px;height:20px;border-top:1px solid #fff;border-right:2px solid #8a8a8a"></div>
<div class="a" style="left:1077px;top:146px;width:62px;height:20px;border-top:1px solid #fff;border-right:2px solid #8a8a8a"></div>
<div class="rt" style="left:985px;top:147px">Layers</div><div class="rt" style="left:1031px;top:149px">Objects</div><div class="rt" style="left:1082px;top:149px">Properties</div>
<div class="a" style="left:984px;top:178px;width:205px;height:257px;background:#fff;border-top:2px solid #6a6a6a;border-left:2px solid #6a6a6a"></div>
<div class="lay" style="top:179.5px"><div class="ck"></div><div class="sw" style="background:#808080"></div><div class="cl"></div><div class="nm">Top Assy</div><div class="nr"></div></div>
<div class="lay" style="top:202.0px"><div class="ck"></div><div class="sw" style="background:#00c000"></div><div class="cl"></div><div class="nm">Top Silk</div><div class="nr"></div></div>
<div class="lay" style="top:224.5px"><div class="ck"></div><div class="sw" style="background:#2c3e50"></div><div class="cl"></div><div class="nm">Top Mask</div><div class="nr"></div></div>
<div class="lay" style="top:247.0px"><div class="ck"></div><div class="sw" style="background:#9a8a30"></div><div class="cl"></div><div class="nm">Top Paste</div><div class="nr"></div></div>
<div class="lay" style="top:269.5px"><div class="ck"></div><div class="sw" style="background:#ffffa8"></div><div class="cl"></div><div class="nm">Top</div><div class="nr">(1)</div></div>
<div class="lay" style="top:292.0px"><div class="ck"></div><div class="sw" style="background:#ffffa8"></div><div class="cl"></div><div class="nm">Bottom</div><div class="nr">(2)</div></div>
<div class="lay" style="top:314.5px"><div class="ck"></div><div class="sw" style="background:#9a8a30"></div><div class="cl"></div><div class="nm">Bottom Paste</div><div class="nr"></div></div>
<div class="lay" style="top:337.0px"><div class="ck"></div><div class="sw" style="background:#2c3e50"></div><div class="cl"></div><div class="nm">Bottom Mask</div><div class="nr"></div></div>
<div class="lay" style="top:359.5px"><div class="ck"></div><div class="sw" style="background:#3232ff"></div><div class="cl"></div><div class="nm">Bottom Silk</div><div class="nr"></div></div>
<div class="lay" style="top:382.0px"><div class="ck"></div><div class="sw" style="background:#808080"></div><div class="cl"></div><div class="nm">Bottom Assy</div><div class="nr"></div></div>
<div class="lay" style="top:404.5px"><div class="ck"></div><div class="sw" style="background:#8000c0"></div><div class="cl"></div><div class="nm">Board Outline</div><div class="nr"></div></div>
<svg class="a" style="left:0;top:0;z-index:3" width="1280" height="720"><path d="M991.5,190.5L996,188.0L1000,192.5L1009,182.5L1011.5,184.5L1000.5,198.5Z" fill="#2858a8"/><path d="M991.5,213.0L996,210.5L1000,215.0L1009,205.0L1011.5,207.0L1000.5,221.0Z" fill="#2858a8"/><path d="M991.5,235.5L996,233.0L1000,237.5L1009,227.5L1011.5,229.5L1000.5,243.5Z" fill="#2858a8"/><path d="M991.5,258.0L996,255.5L1000,260.0L1009,250.0L1011.5,252.0L1000.5,266.0Z" fill="#2858a8"/><path d="M991.5,280.5L996,278.0L1000,282.5L1009,272.5L1011.5,274.5L1000.5,288.5Z" fill="#2858a8"/><path d="M991.5,303.0L996,300.5L1000,305.0L1009,295.0L1011.5,297.0L1000.5,311.0Z" fill="#2858a8"/><path d="M991.5,325.5L996,323.0L1000,327.5L1009,317.5L1011.5,319.5L1000.5,333.5Z" fill="#2858a8"/><path d="M991.5,348.0L996,345.5L1000,350.0L1009,340.0L1011.5,342.0L1000.5,356.0Z" fill="#2858a8"/><path d="M991.5,370.5L996,368.0L1000,372.5L1009,362.5L1011.5,364.5L1000.5,378.5Z" fill="#2858a8"/><path d="M991.5,393.0L996,390.5L1000,395.0L1009,385.0L1011.5,387.0L1000.5,401.0Z" fill="#2858a8"/><path d="M991.5,415.5L996,413.0L1000,417.5L1009,407.5L1011.5,409.5L1000.5,423.5Z" fill="#2858a8"/><rect x="986.5" y="180.5" width="29" height="21" fill="none" stroke="#5a8ad0" stroke-width="1.5"/><rect x="998" y="448" width="6" height="6" fill="#c02020"/><rect x="1001" y="445" width="6" height="6" fill="#2020d0"/><path d="M989,456H1001M995,450V462" stroke="#20a030" stroke-width="2.2"/><rect x="1014.5" y="451.5" width="13" height="9" fill="#fff" stroke="#333"/><path d="M1016,454H1026M1016,456.5H1026M1016,459H1026" stroke="#555" stroke-width="0.8"/><rect x="1020" y="449" width="5" height="5" fill="#e02020"/><rect x="1024" y="446" width="5" height="5" fill="#2020e0"/><rect x="1174" y="450" width="9" height="9" fill="#aaa"/><rect x="1177" y="448" width="8" height="8" fill="#111"/><path d="M1114,488H1123M1114,491H1123M1114,494H1123M1114,497H1123M1114,500H1123" stroke="#a02020" stroke-width="1.2"/><path d="M1118,489V499" stroke="#111"/><path d="M1115,491Q1111,494 1115,497" stroke="#111" fill="none"/><rect x="1151.5" y="486.5" width="9" height="14" rx="1" fill="#28d8c0" stroke="#111"/><path d="M1149,489H1151M1149,492H1151M1149,495H1151M1149,498H1151M1161,489H1163M1161,492H1163M1161,495H1163M1161,498H1163" stroke="#111"/><path d="M1172,488L1177,492L1182,496L1186,499" stroke="#2a2ab0" stroke-width="1.5" fill="none"/><circle cx="1172" cy="488" r="1.8" fill="#fff" stroke="#2a2ab0"/><circle cx="1186" cy="499" r="1.8" fill="#fff" stroke="#2a2ab0"/><path d="M1174,520H1183L1178.5,516Z" fill="#555"/><path d="M1174,566H1183L1178.5,570Z" fill="#555"/><path d="M1191,707L1204,694M1195,707L1204,698M1199,707L1204,702" stroke="#aaa" stroke-width="1.3"/></svg>
<div class="combo" style="left:1081px;top:442px;width:84px;height:20px">Contrast<div class="btn"></div></div>
<div class="rt" style="left:985px;top:481px">Design Manager</div>
<div class="a" style="left:1142px;top:481px;width:25px;height:23px;background:#f8f8f8;border-left:1px solid #bbb;border-top:1px solid #bbb"></div>
<div class="a" style="left:984px;top:507px;width:205px;height:71px;background:#fff;border-top:2px solid #7a7a7a;border-left:2px solid #7a7a7a"></div>
<div class="a" style="left:1170px;top:509px;width:18px;height:68px;background:#f6f6f6"></div>
<div class="a" style="left:1171px;top:527px;width:17px;height:17px;background:#eee;border:1px solid #fff;border-right-color:#999;border-bottom-color:#999"></div>
<div class="rt" style="left:988px;top:508.5px;letter-spacing:-0.3px">C1 - 0,1 - CAP</div>
<div class="rt" style="left:988px;top:522.2px;letter-spacing:-0.3px">C2 - 0,1 - CAP</div>
<div class="rt" style="left:988px;top:535.9px;letter-spacing:-0.3px">C3 - 1uF - CAP100RP</div>
<div class="rt" style="left:988px;top:549.6px;letter-spacing:-0.3px">C4 - 1uF - CAP1000AP</div>
<div class="rt" style="left:988px;top:563.3px;letter-spacing:-0.3px">C5 - 1uF - CAP1000AP</div>
<div class="rt" style="left:985px;top:587px">Component pins:</div>
<div class="a" style="left:984px;top:604px;width:206px;height:71px;background:#fff;border-top:2px solid #7a7a7a;border-left:2px solid #7a7a7a"></div>
<div class="a" style="left:976px;top:474px;width:223px;height:211px;border-top:1px solid #fff;border-left:1px solid #fff;border-right:2px solid #8a8a8a;border-bottom:2px solid #8a8a8a"></div>
<div class="a" style="left:73px;top:686px;width:1133px;height:1px;background:#c8c8c8"></div>
<div class="a" style="left:74px;top:688px;width:918px;height:24px;border-left:1px solid #c8c8c8;border-top:1px solid #d8d8d8"></div>
<div class="a" style="left:994px;top:688px;width:105px;height:24px;border-left:1px solid #c0c0c0;border-top:1px solid #d8d8d8"></div>
<div class="a" style="left:1101px;top:688px;width:105px;height:24px;border-left:1px solid #c0c0c0;border-top:1px solid #d8d8d8"></div>
<div class="st" style="left:92px">J2 (ISP6Pins)&nbsp; X=3299.92&nbsp; Y=1799.51</div>
<div class="st" style="left:996px">X=3475.7 mil</div><div class="st" style="left:1103px">Y=2042 mil</div>

</body></html>
